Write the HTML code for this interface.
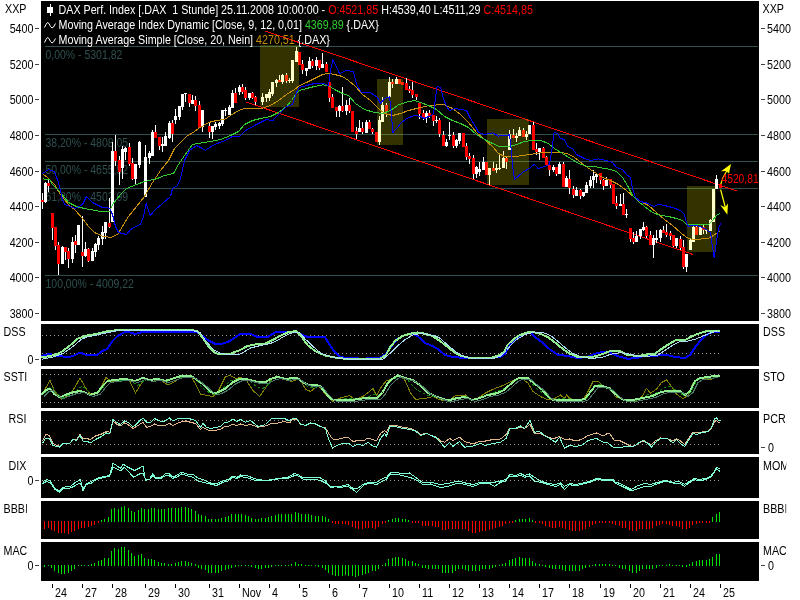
<!DOCTYPE html>
<html lang="de"><head><meta charset="utf-8"><title>DAX Perf. Index</title>
<style>html,body{margin:0;padding:0;background:#fff;overflow:hidden}svg{display:block;will-change:transform}text{font-family:"Liberation Sans",Arial,sans-serif;font-size:13px;fill:#000}.w{fill:#fff}.r{fill:#f00}.g{fill:#32cd32}.o{fill:#c8900c}.f{fill:#2f4f4f}</style></head><body>
<svg width="800" height="600" viewBox="0 0 800 600">
<rect x="0" y="0" width="800" height="600" fill="#fff"/>
<g shape-rendering="crispEdges">
<rect x="41" y="1" width="718" height="320" fill="#000"/>
<rect x="41" y="324" width="718" height="42" fill="#000"/>
<rect x="41" y="369" width="718" height="39" fill="#000"/>
<rect x="41" y="411" width="718" height="43" fill="#000"/>
<rect x="41" y="457" width="718" height="41" fill="#000"/>
<rect x="41" y="501" width="718" height="38" fill="#000"/>
<rect x="41" y="542" width="718" height="39" fill="#000"/>
</g>
<g shape-rendering="crispEdges">
<rect x="45" y="46" width="713" height="1" fill="#2f4f4f"/>
<rect x="45" y="134" width="713" height="1" fill="#2f4f4f"/>
<rect x="45" y="161" width="713" height="1" fill="#2f4f4f"/>
<rect x="45" y="188" width="713" height="1" fill="#2f4f4f"/>
<rect x="45" y="275" width="713" height="1" fill="#2f4f4f"/>
</g>
<text transform="translate(45.5,59) scale(0.805,1)" class="f" xml:space="preserve">0,00% - 5301,82</text>
<text transform="translate(45.5,147) scale(0.805,1)" class="f" xml:space="preserve">38,20% - 4808,05</text>
<text transform="translate(45.5,174) scale(0.805,1)" class="f" xml:space="preserve">50,00% - 4655,52</text>
<text transform="translate(45.5,201) scale(0.805,1)" class="f" xml:space="preserve">61,80% - 4502,99</text>
<text transform="translate(45.5,288) scale(0.805,1)" class="f" xml:space="preserve">100,00% - 4009,22</text>
<g shape-rendering="crispEdges" stroke="#f00" stroke-width="1" fill="none">
<line x1="265" y1="31" x2="737" y2="191"/>
<line x1="246" y1="102" x2="693" y2="254.5"/>
</g>
<g shape-rendering="crispEdges">
<rect x="42" y="193" width="1" height="16" fill="#fff"/>
<rect x="41" y="200" width="3" height="2" fill="#f00"/>
<rect x="45" y="182" width="1" height="21" fill="#fff"/>
<rect x="44" y="183" width="3" height="19" fill="#fff"/>
<rect x="48" y="180" width="1" height="12" fill="#fff"/>
<rect x="47" y="183" width="3" height="3" fill="#f00"/>
<rect x="52" y="213" width="1" height="27" fill="#fff"/>
<rect x="51" y="213" width="3" height="15" fill="#f00"/>
<rect x="55" y="227" width="1" height="23" fill="#fff"/>
<rect x="54" y="227" width="3" height="19" fill="#f00"/>
<rect x="58" y="242" width="1" height="33" fill="#fff"/>
<rect x="57" y="245" width="3" height="19" fill="#f00"/>
<rect x="62" y="246" width="1" height="18" fill="#fff"/>
<rect x="61" y="247" width="3" height="17" fill="#fff"/>
<rect x="65" y="247" width="1" height="13" fill="#fff"/>
<rect x="64" y="247" width="3" height="5" fill="#f00"/>
<rect x="68" y="248" width="1" height="20" fill="#fff"/>
<rect x="67" y="251" width="3" height="8" fill="#f00"/>
<rect x="72" y="237" width="1" height="26" fill="#fff"/>
<rect x="71" y="242" width="3" height="17" fill="#fff"/>
<rect x="75" y="235" width="1" height="18" fill="#fff"/>
<rect x="74" y="241" width="3" height="4" fill="#f00"/>
<rect x="78" y="225" width="1" height="20" fill="#fff"/>
<rect x="77" y="225" width="3" height="20" fill="#fff"/>
<rect x="82" y="216" width="1" height="51" fill="#fff"/>
<rect x="81" y="252" width="3" height="4" fill="#f00"/>
<rect x="85" y="242" width="1" height="15" fill="#fff"/>
<rect x="84" y="249" width="3" height="7" fill="#fff"/>
<rect x="88" y="248" width="1" height="14" fill="#fff"/>
<rect x="87" y="249" width="3" height="12" fill="#f00"/>
<rect x="92" y="248" width="1" height="13" fill="#fff"/>
<rect x="91" y="251" width="3" height="10" fill="#fff"/>
<rect x="95" y="243" width="1" height="14" fill="#fff"/>
<rect x="94" y="244" width="3" height="8" fill="#fff"/>
<rect x="98" y="236" width="1" height="14" fill="#fff"/>
<rect x="97" y="238" width="3" height="7" fill="#fff"/>
<rect x="102" y="226" width="1" height="19" fill="#fff"/>
<rect x="101" y="232" width="3" height="7" fill="#fff"/>
<rect x="105" y="222" width="1" height="17" fill="#fff"/>
<rect x="104" y="222" width="3" height="11" fill="#fff"/>
<rect x="109" y="198" width="1" height="30" fill="#fff"/>
<rect x="108" y="223" width="3" height="4" fill="#f00"/>
<rect x="112" y="142" width="1" height="80" fill="#fff"/>
<rect x="111" y="151" width="3" height="71" fill="#fff"/>
<rect x="115" y="135" width="1" height="31" fill="#fff"/>
<rect x="114" y="151" width="3" height="10" fill="#f00"/>
<rect x="119" y="156" width="1" height="29" fill="#fff"/>
<rect x="118" y="160" width="3" height="12" fill="#f00"/>
<rect x="122" y="146" width="1" height="33" fill="#fff"/>
<rect x="121" y="149" width="3" height="19" fill="#fff"/>
<rect x="125" y="147" width="1" height="13" fill="#fff"/>
<rect x="124" y="148" width="3" height="4" fill="#fff"/>
<rect x="129" y="143" width="1" height="23" fill="#fff"/>
<rect x="128" y="147" width="3" height="17" fill="#f00"/>
<rect x="132" y="158" width="1" height="22" fill="#fff"/>
<rect x="131" y="163" width="3" height="16" fill="#f00"/>
<rect x="135" y="164" width="1" height="21" fill="#fff"/>
<rect x="134" y="164" width="3" height="15" fill="#fff"/>
<rect x="139" y="141" width="1" height="27" fill="#fff"/>
<rect x="138" y="142" width="3" height="23" fill="#fff"/>
<rect x="145" y="145" width="1" height="52" fill="#fff"/>
<rect x="144" y="157" width="3" height="40" fill="#fff"/>
<rect x="149" y="151" width="1" height="13" fill="#fff"/>
<rect x="148" y="153" width="3" height="5" fill="#fff"/>
<rect x="152" y="130" width="1" height="26" fill="#fff"/>
<rect x="151" y="132" width="3" height="24" fill="#fff"/>
<rect x="155" y="125" width="1" height="13" fill="#fff"/>
<rect x="154" y="132" width="3" height="6" fill="#f00"/>
<rect x="159" y="137" width="1" height="13" fill="#fff"/>
<rect x="158" y="137" width="3" height="9" fill="#f00"/>
<rect x="162" y="137" width="1" height="15" fill="#fff"/>
<rect x="161" y="144" width="3" height="2" fill="#fff"/>
<rect x="165" y="132" width="1" height="14" fill="#fff"/>
<rect x="164" y="136" width="3" height="10" fill="#fff"/>
<rect x="169" y="121" width="1" height="18" fill="#fff"/>
<rect x="168" y="123" width="3" height="15" fill="#fff"/>
<rect x="172" y="120" width="1" height="22" fill="#fff"/>
<rect x="171" y="123" width="3" height="11" fill="#f00"/>
<rect x="175" y="109" width="1" height="15" fill="#fff"/>
<rect x="174" y="116" width="3" height="4" fill="#fff"/>
<rect x="179" y="106" width="1" height="14" fill="#fff"/>
<rect x="178" y="106" width="3" height="11" fill="#fff"/>
<rect x="182" y="94" width="1" height="16" fill="#fff"/>
<rect x="181" y="94" width="3" height="13" fill="#fff"/>
<rect x="185" y="93" width="1" height="9" fill="#fff"/>
<rect x="184" y="93" width="3" height="1" fill="#fff"/>
<rect x="189" y="94" width="1" height="13" fill="#fff"/>
<rect x="188" y="94" width="3" height="9" fill="#f00"/>
<rect x="192" y="95" width="1" height="9" fill="#fff"/>
<rect x="191" y="100" width="3" height="4" fill="#fff"/>
<rect x="195" y="96" width="1" height="15" fill="#fff"/>
<rect x="194" y="100" width="3" height="6" fill="#f00"/>
<rect x="199" y="101" width="1" height="27" fill="#fff"/>
<rect x="198" y="105" width="3" height="23" fill="#f00"/>
<rect x="202" y="110" width="1" height="22" fill="#fff"/>
<rect x="201" y="110" width="3" height="17" fill="#fff"/>
<rect x="209" y="122" width="1" height="16" fill="#fff"/>
<rect x="208" y="126" width="3" height="6" fill="#f00"/>
<rect x="212" y="126" width="1" height="13" fill="#fff"/>
<rect x="211" y="126" width="3" height="6" fill="#fff"/>
<rect x="215" y="122" width="1" height="8" fill="#fff"/>
<rect x="214" y="124" width="3" height="3" fill="#fff"/>
<rect x="219" y="122" width="1" height="7" fill="#fff"/>
<rect x="218" y="123" width="3" height="3" fill="#fff"/>
<rect x="222" y="110" width="1" height="16" fill="#fff"/>
<rect x="221" y="110" width="3" height="14" fill="#fff"/>
<rect x="225" y="108" width="1" height="8" fill="#fff"/>
<rect x="224" y="110" width="3" height="1" fill="#fff"/>
<rect x="229" y="105" width="1" height="10" fill="#fff"/>
<rect x="228" y="107" width="3" height="8" fill="#fff"/>
<rect x="232" y="90" width="1" height="18" fill="#fff"/>
<rect x="231" y="93" width="3" height="15" fill="#fff"/>
<rect x="235" y="88" width="1" height="15" fill="#fff"/>
<rect x="234" y="93" width="3" height="10" fill="#f00"/>
<rect x="239" y="85" width="1" height="10" fill="#fff"/>
<rect x="238" y="87" width="3" height="5" fill="#fff"/>
<rect x="242" y="84" width="1" height="10" fill="#fff"/>
<rect x="241" y="87" width="3" height="5" fill="#f00"/>
<rect x="245" y="87" width="1" height="13" fill="#fff"/>
<rect x="244" y="90" width="3" height="8" fill="#f00"/>
<rect x="249" y="93" width="1" height="7" fill="#fff"/>
<rect x="248" y="93" width="3" height="5" fill="#fff"/>
<rect x="252" y="92" width="1" height="7" fill="#fff"/>
<rect x="251" y="93" width="3" height="5" fill="#f00"/>
<rect x="255" y="96" width="1" height="9" fill="#fff"/>
<rect x="254" y="97" width="3" height="5" fill="#f00"/>
<rect x="262" y="93" width="1" height="12" fill="#fff"/>
<rect x="261" y="97" width="3" height="5" fill="#fff"/>
<rect x="266" y="94" width="1" height="8" fill="#fff"/>
<rect x="265" y="94" width="3" height="4" fill="#fff"/>
<rect x="269" y="89" width="1" height="12" fill="#fff"/>
<rect x="268" y="92" width="3" height="6" fill="#fff"/>
<rect x="272" y="82" width="1" height="14" fill="#fff"/>
<rect x="271" y="82" width="3" height="12" fill="#fff"/>
<rect x="276" y="79" width="1" height="8" fill="#fff"/>
<rect x="275" y="80" width="3" height="3" fill="#fff"/>
<rect x="279" y="75" width="1" height="7" fill="#fff"/>
<rect x="278" y="80" width="3" height="2" fill="#f00"/>
<rect x="282" y="74" width="1" height="10" fill="#fff"/>
<rect x="281" y="75" width="3" height="7" fill="#fff"/>
<rect x="286" y="73" width="1" height="10" fill="#fff"/>
<rect x="285" y="75" width="3" height="6" fill="#f00"/>
<rect x="289" y="78" width="1" height="5" fill="#fff"/>
<rect x="288" y="80" width="3" height="1" fill="#fff"/>
<rect x="292" y="60" width="1" height="23" fill="#fff"/>
<rect x="291" y="60" width="3" height="21" fill="#fff"/>
<rect x="296" y="47" width="1" height="15" fill="#fff"/>
<rect x="295" y="51" width="3" height="11" fill="#fff"/>
<rect x="299" y="52" width="1" height="13" fill="#fff"/>
<rect x="298" y="52" width="3" height="13" fill="#f00"/>
<rect x="302" y="60" width="1" height="14" fill="#fff"/>
<rect x="301" y="64" width="3" height="6" fill="#f00"/>
<rect x="306" y="68" width="1" height="8" fill="#fff"/>
<rect x="305" y="68" width="3" height="3" fill="#fff"/>
<rect x="309" y="57" width="1" height="12" fill="#fff"/>
<rect x="308" y="61" width="3" height="8" fill="#fff"/>
<rect x="312" y="59" width="1" height="9" fill="#fff"/>
<rect x="311" y="61" width="3" height="5" fill="#f00"/>
<rect x="316" y="57" width="1" height="13" fill="#fff"/>
<rect x="315" y="60" width="3" height="6" fill="#fff"/>
<rect x="319" y="60" width="1" height="10" fill="#fff"/>
<rect x="318" y="60" width="3" height="8" fill="#f00"/>
<rect x="322" y="53" width="1" height="15" fill="#fff"/>
<rect x="321" y="64" width="3" height="4" fill="#fff"/>
<rect x="326" y="62" width="1" height="10" fill="#fff"/>
<rect x="325" y="64" width="3" height="8" fill="#f00"/>
<rect x="329" y="82" width="1" height="20" fill="#fff"/>
<rect x="328" y="82" width="3" height="16" fill="#f00"/>
<rect x="332" y="94" width="1" height="14" fill="#fff"/>
<rect x="331" y="97" width="3" height="11" fill="#f00"/>
<rect x="336" y="107" width="1" height="10" fill="#fff"/>
<rect x="335" y="107" width="3" height="4" fill="#f00"/>
<rect x="339" y="105" width="1" height="12" fill="#fff"/>
<rect x="338" y="106" width="3" height="5" fill="#fff"/>
<rect x="342" y="87" width="1" height="25" fill="#fff"/>
<rect x="341" y="106" width="3" height="5" fill="#f00"/>
<rect x="346" y="100" width="1" height="15" fill="#fff"/>
<rect x="345" y="105" width="3" height="6" fill="#fff"/>
<rect x="349" y="98" width="1" height="15" fill="#fff"/>
<rect x="348" y="105" width="3" height="6" fill="#f00"/>
<rect x="352" y="111" width="1" height="21" fill="#fff"/>
<rect x="351" y="111" width="3" height="21" fill="#f00"/>
<rect x="356" y="127" width="1" height="12" fill="#fff"/>
<rect x="355" y="131" width="3" height="3" fill="#f00"/>
<rect x="359" y="120" width="1" height="12" fill="#fff"/>
<rect x="358" y="128" width="3" height="4" fill="#fff"/>
<rect x="362" y="122" width="1" height="12" fill="#fff"/>
<rect x="361" y="128" width="3" height="4" fill="#f00"/>
<rect x="366" y="120" width="1" height="13" fill="#fff"/>
<rect x="365" y="122" width="3" height="11" fill="#fff"/>
<rect x="369" y="120" width="1" height="9" fill="#fff"/>
<rect x="368" y="122" width="3" height="7" fill="#f00"/>
<rect x="372" y="128" width="1" height="6" fill="#fff"/>
<rect x="371" y="129" width="3" height="3" fill="#f00"/>
<rect x="376" y="132" width="1" height="10" fill="#fff"/>
<rect x="375" y="132" width="3" height="10" fill="#f00"/>
<rect x="379" y="116" width="1" height="29" fill="#fff"/>
<rect x="378" y="120" width="3" height="22" fill="#fff"/>
<rect x="382" y="97" width="1" height="25" fill="#fff"/>
<rect x="381" y="105" width="3" height="17" fill="#fff"/>
<rect x="386" y="103" width="1" height="14" fill="#fff"/>
<rect x="385" y="105" width="3" height="7" fill="#f00"/>
<rect x="389" y="77" width="1" height="20" fill="#fff"/>
<rect x="388" y="82" width="3" height="15" fill="#fff"/>
<rect x="392" y="79" width="1" height="9" fill="#fff"/>
<rect x="391" y="82" width="3" height="2" fill="#f00"/>
<rect x="396" y="77" width="1" height="7" fill="#fff"/>
<rect x="395" y="79" width="3" height="5" fill="#fff"/>
<rect x="399" y="79" width="1" height="5" fill="#fff"/>
<rect x="398" y="79" width="3" height="5" fill="#f00"/>
<rect x="402" y="82" width="1" height="3" fill="#fff"/>
<rect x="401" y="82" width="3" height="3" fill="#f00"/>
<rect x="406" y="78" width="1" height="12" fill="#fff"/>
<rect x="405" y="83" width="3" height="7" fill="#f00"/>
<rect x="409" y="86" width="1" height="7" fill="#fff"/>
<rect x="408" y="89" width="3" height="2" fill="#f00"/>
<rect x="412" y="82" width="1" height="16" fill="#fff"/>
<rect x="411" y="90" width="3" height="5" fill="#f00"/>
<rect x="416" y="94" width="1" height="6" fill="#fff"/>
<rect x="415" y="94" width="3" height="3" fill="#f00"/>
<rect x="419" y="103" width="1" height="16" fill="#fff"/>
<rect x="418" y="103" width="3" height="11" fill="#f00"/>
<rect x="423" y="110" width="1" height="10" fill="#fff"/>
<rect x="422" y="113" width="3" height="5" fill="#f00"/>
<rect x="426" y="111" width="1" height="12" fill="#fff"/>
<rect x="425" y="113" width="3" height="4" fill="#fff"/>
<rect x="429" y="110" width="1" height="8" fill="#fff"/>
<rect x="428" y="113" width="3" height="3" fill="#f00"/>
<rect x="433" y="115" width="1" height="11" fill="#fff"/>
<rect x="432" y="115" width="3" height="6" fill="#f00"/>
<rect x="436" y="116" width="1" height="7" fill="#fff"/>
<rect x="435" y="120" width="3" height="1" fill="#fff"/>
<rect x="439" y="118" width="1" height="19" fill="#fff"/>
<rect x="438" y="120" width="3" height="14" fill="#f00"/>
<rect x="443" y="131" width="1" height="15" fill="#fff"/>
<rect x="442" y="135" width="3" height="11" fill="#f00"/>
<rect x="446" y="139" width="1" height="8" fill="#fff"/>
<rect x="445" y="142" width="3" height="4" fill="#fff"/>
<rect x="449" y="122" width="1" height="18" fill="#fff"/>
<rect x="448" y="135" width="3" height="1" fill="#fff"/>
<rect x="453" y="132" width="1" height="16" fill="#fff"/>
<rect x="452" y="135" width="3" height="11" fill="#f00"/>
<rect x="456" y="139" width="1" height="9" fill="#fff"/>
<rect x="455" y="140" width="3" height="6" fill="#fff"/>
<rect x="459" y="133" width="1" height="11" fill="#fff"/>
<rect x="458" y="133" width="3" height="8" fill="#fff"/>
<rect x="463" y="133" width="1" height="14" fill="#fff"/>
<rect x="462" y="133" width="3" height="14" fill="#f00"/>
<rect x="466" y="143" width="1" height="17" fill="#fff"/>
<rect x="465" y="146" width="3" height="11" fill="#f00"/>
<rect x="469" y="153" width="1" height="11" fill="#fff"/>
<rect x="468" y="156" width="3" height="3" fill="#f00"/>
<rect x="473" y="155" width="1" height="24" fill="#fff"/>
<rect x="472" y="158" width="3" height="16" fill="#f00"/>
<rect x="476" y="166" width="1" height="12" fill="#fff"/>
<rect x="475" y="167" width="3" height="7" fill="#fff"/>
<rect x="479" y="162" width="1" height="14" fill="#fff"/>
<rect x="478" y="169" width="3" height="3" fill="#fff"/>
<rect x="483" y="157" width="1" height="13" fill="#fff"/>
<rect x="482" y="162" width="3" height="8" fill="#fff"/>
<rect x="486" y="162" width="1" height="13" fill="#fff"/>
<rect x="485" y="162" width="3" height="13" fill="#f00"/>
<rect x="489" y="168" width="1" height="17" fill="#fff"/>
<rect x="488" y="168" width="3" height="7" fill="#fff"/>
<rect x="493" y="162" width="1" height="9" fill="#fff"/>
<rect x="492" y="168" width="3" height="3" fill="#f00"/>
<rect x="496" y="164" width="1" height="9" fill="#fff"/>
<rect x="495" y="168" width="3" height="2" fill="#fff"/>
<rect x="499" y="155" width="1" height="15" fill="#fff"/>
<rect x="498" y="168" width="3" height="1" fill="#fff"/>
<rect x="503" y="151" width="1" height="17" fill="#fff"/>
<rect x="502" y="158" width="3" height="10" fill="#fff"/>
<rect x="506" y="156" width="1" height="13" fill="#fff"/>
<rect x="505" y="158" width="3" height="4" fill="#f00"/>
<rect x="509" y="130" width="1" height="20" fill="#fff"/>
<rect x="508" y="134" width="3" height="16" fill="#fff"/>
<rect x="513" y="129" width="1" height="9" fill="#fff"/>
<rect x="512" y="135" width="3" height="3" fill="#f00"/>
<rect x="516" y="133" width="1" height="9" fill="#fff"/>
<rect x="515" y="136" width="3" height="2" fill="#fff"/>
<rect x="519" y="127" width="1" height="9" fill="#fff"/>
<rect x="518" y="130" width="3" height="6" fill="#fff"/>
<rect x="523" y="128" width="1" height="9" fill="#fff"/>
<rect x="522" y="130" width="3" height="7" fill="#f00"/>
<rect x="526" y="131" width="1" height="9" fill="#fff"/>
<rect x="525" y="134" width="3" height="3" fill="#fff"/>
<rect x="529" y="125" width="1" height="9" fill="#fff"/>
<rect x="528" y="125" width="3" height="9" fill="#fff"/>
<rect x="533" y="122" width="1" height="28" fill="#fff"/>
<rect x="532" y="125" width="3" height="25" fill="#f00"/>
<rect x="536" y="143" width="1" height="12" fill="#fff"/>
<rect x="535" y="149" width="3" height="3" fill="#f00"/>
<rect x="539" y="148" width="1" height="12" fill="#fff"/>
<rect x="538" y="148" width="3" height="4" fill="#fff"/>
<rect x="543" y="147" width="1" height="11" fill="#fff"/>
<rect x="542" y="148" width="3" height="10" fill="#f00"/>
<rect x="546" y="156" width="1" height="9" fill="#fff"/>
<rect x="545" y="157" width="3" height="8" fill="#f00"/>
<rect x="549" y="165" width="1" height="11" fill="#fff"/>
<rect x="548" y="165" width="3" height="5" fill="#f00"/>
<rect x="553" y="165" width="1" height="7" fill="#fff"/>
<rect x="552" y="167" width="3" height="3" fill="#fff"/>
<rect x="556" y="167" width="1" height="9" fill="#fff"/>
<rect x="555" y="167" width="3" height="7" fill="#f00"/>
<rect x="559" y="162" width="1" height="12" fill="#fff"/>
<rect x="558" y="164" width="3" height="10" fill="#fff"/>
<rect x="563" y="162" width="1" height="25" fill="#fff"/>
<rect x="562" y="164" width="3" height="23" fill="#f00"/>
<rect x="566" y="176" width="1" height="11" fill="#fff"/>
<rect x="565" y="178" width="3" height="9" fill="#fff"/>
<rect x="569" y="170" width="1" height="24" fill="#fff"/>
<rect x="568" y="179" width="3" height="9" fill="#f00"/>
<rect x="573" y="186" width="1" height="12" fill="#fff"/>
<rect x="572" y="189" width="3" height="6" fill="#f00"/>
<rect x="576" y="187" width="1" height="9" fill="#fff"/>
<rect x="575" y="190" width="3" height="6" fill="#fff"/>
<rect x="580" y="189" width="1" height="10" fill="#fff"/>
<rect x="579" y="190" width="3" height="6" fill="#f00"/>
<rect x="583" y="192" width="1" height="5" fill="#fff"/>
<rect x="582" y="192" width="3" height="4" fill="#fff"/>
<rect x="586" y="182" width="1" height="11" fill="#fff"/>
<rect x="585" y="185" width="3" height="8" fill="#fff"/>
<rect x="590" y="176" width="1" height="12" fill="#fff"/>
<rect x="589" y="180" width="3" height="6" fill="#fff"/>
<rect x="593" y="170" width="1" height="18" fill="#fff"/>
<rect x="592" y="176" width="3" height="4" fill="#fff"/>
<rect x="596" y="173" width="1" height="10" fill="#fff"/>
<rect x="595" y="174" width="3" height="3" fill="#fff"/>
<rect x="600" y="173" width="1" height="11" fill="#fff"/>
<rect x="599" y="173" width="3" height="7" fill="#f00"/>
<rect x="603" y="179" width="1" height="11" fill="#fff"/>
<rect x="602" y="180" width="3" height="6" fill="#f00"/>
<rect x="606" y="177" width="1" height="9" fill="#fff"/>
<rect x="605" y="180" width="3" height="6" fill="#fff"/>
<rect x="610" y="179" width="1" height="9" fill="#fff"/>
<rect x="609" y="179" width="3" height="6" fill="#f00"/>
<rect x="613" y="184" width="1" height="20" fill="#fff"/>
<rect x="612" y="184" width="3" height="20" fill="#f00"/>
<rect x="616" y="196" width="1" height="13" fill="#fff"/>
<rect x="615" y="203" width="3" height="3" fill="#f00"/>
<rect x="620" y="194" width="1" height="12" fill="#fff"/>
<rect x="619" y="204" width="3" height="2" fill="#fff"/>
<rect x="623" y="193" width="1" height="22" fill="#fff"/>
<rect x="622" y="204" width="3" height="11" fill="#f00"/>
<rect x="626" y="209" width="1" height="9" fill="#fff"/>
<rect x="625" y="214" width="3" height="1" fill="#fff"/>
<rect x="630" y="228" width="1" height="14" fill="#fff"/>
<rect x="629" y="228" width="3" height="11" fill="#f00"/>
<rect x="633" y="232" width="1" height="12" fill="#fff"/>
<rect x="632" y="238" width="3" height="4" fill="#f00"/>
<rect x="636" y="231" width="1" height="11" fill="#fff"/>
<rect x="635" y="236" width="3" height="6" fill="#fff"/>
<rect x="640" y="229" width="1" height="10" fill="#fff"/>
<rect x="639" y="229" width="3" height="7" fill="#fff"/>
<rect x="643" y="222" width="1" height="9" fill="#fff"/>
<rect x="642" y="227" width="3" height="3" fill="#fff"/>
<rect x="646" y="226" width="1" height="12" fill="#fff"/>
<rect x="645" y="227" width="3" height="9" fill="#f00"/>
<rect x="650" y="231" width="1" height="14" fill="#fff"/>
<rect x="649" y="235" width="3" height="10" fill="#f00"/>
<rect x="653" y="235" width="1" height="23" fill="#fff"/>
<rect x="652" y="238" width="3" height="7" fill="#fff"/>
<rect x="656" y="230" width="1" height="13" fill="#fff"/>
<rect x="655" y="238" width="3" height="2" fill="#fff"/>
<rect x="660" y="229" width="1" height="13" fill="#fff"/>
<rect x="659" y="230" width="3" height="8" fill="#fff"/>
<rect x="663" y="226" width="1" height="7" fill="#fff"/>
<rect x="662" y="230" width="3" height="3" fill="#f00"/>
<rect x="666" y="224" width="1" height="13" fill="#fff"/>
<rect x="665" y="232" width="3" height="3" fill="#f00"/>
<rect x="670" y="231" width="1" height="9" fill="#fff"/>
<rect x="669" y="233" width="3" height="3" fill="#f00"/>
<rect x="673" y="235" width="1" height="12" fill="#fff"/>
<rect x="672" y="235" width="3" height="11" fill="#f00"/>
<rect x="676" y="238" width="1" height="10" fill="#fff"/>
<rect x="675" y="238" width="3" height="8" fill="#fff"/>
<rect x="680" y="236" width="1" height="14" fill="#fff"/>
<rect x="679" y="239" width="3" height="9" fill="#f00"/>
<rect x="683" y="240" width="1" height="29" fill="#fff"/>
<rect x="682" y="247" width="3" height="20" fill="#f00"/>
<rect x="686" y="254" width="1" height="18" fill="#fff"/>
<rect x="685" y="254" width="3" height="13" fill="#fff"/>
<rect x="690" y="239" width="1" height="11" fill="#fff"/>
<rect x="689" y="240" width="3" height="10" fill="#fff"/>
<rect x="693" y="226" width="1" height="16" fill="#fff"/>
<rect x="692" y="227" width="3" height="15" fill="#fff"/>
<rect x="696" y="225" width="1" height="10" fill="#fff"/>
<rect x="695" y="227" width="3" height="8" fill="#f00"/>
<rect x="700" y="226" width="1" height="9" fill="#fff"/>
<rect x="699" y="227" width="3" height="8" fill="#fff"/>
<rect x="703" y="225" width="1" height="9" fill="#fff"/>
<rect x="702" y="227" width="3" height="3" fill="#f00"/>
<rect x="706" y="229" width="1" height="5" fill="#fff"/>
<rect x="705" y="230" width="3" height="1" fill="#fff"/>
<rect x="710" y="219" width="1" height="12" fill="#fff"/>
<rect x="709" y="220" width="3" height="11" fill="#fff"/>
<rect x="713" y="189" width="1" height="33" fill="#fff"/>
<rect x="712" y="189" width="3" height="33" fill="#fff"/>
<rect x="716" y="175" width="1" height="14" fill="#fff"/>
<rect x="715" y="179" width="3" height="10" fill="#fff"/>
<rect x="720" y="184" width="1" height="4" fill="#fff"/>
<rect x="719" y="184" width="3" height="4" fill="#f00"/>
<rect x="260" y="45" width="39" height="62" fill="#ffff00" fill-opacity="0.2"/>
<rect x="377" y="79" width="26" height="66" fill="#ffff00" fill-opacity="0.2"/>
<rect x="487" y="119" width="42" height="66" fill="#ffff00" fill-opacity="0.2"/>
<rect x="687" y="186" width="29" height="66" fill="#ffff00" fill-opacity="0.2"/>
</g>
<g shape-rendering="crispEdges">
<polyline points="42.5,173.5 48.5,178.5 54.5,184.5 60.5,194.5 68.5,204.5 75.5,210.5 82.5,218.5 88.5,226.5 94.5,232.5 102.5,236.1 110.5,237.5 117.5,234.5 122.5,226.5 128.5,216.5 136.5,206.5 144.5,196.5 152.5,182.5 160.5,170.5 168.5,160.5 174.5,148.5 180.5,142.5 186.5,136.5 194.5,131.5 198.5,128.5 208.5,122.5 216.5,120.5 224.5,119.5 230.5,115.5 238.5,110.5 244.5,108.5 252.5,108.1 262.5,108.1 270.5,105.5 278.5,100.5 286.5,94.5 294.5,89.5 299.5,85.5 306.5,82.5 314.5,78.5 322.5,74.5 328.5,73.5 334.5,74.5 342.5,76.5 348.5,80.5 355.5,86.5 362.5,94.5 370.5,100.5 378.5,108.5 384.5,113.5 392.5,115.5 400.5,113.5 408.5,110.5 416.5,108.5 426.5,106.1 436.5,104.9 444.5,104.9 452.5,108.5 460.5,114.5 468.5,122.5 476.5,132.5 484.5,139.5 492.5,146.5 498.5,153.5 504.5,156.5 512.5,156.9 522.5,155.5 532.5,154.1 542.5,152.5 552.5,152.1 560.5,152.1 566.5,153.5 572.5,156.1 578.5,160.5 584.5,165.5 590.5,169.5 596.5,173.5 602.5,177.5 610.5,180.5 618.5,184.5 626.5,190.5 634.5,197.5 642.5,202.5 648.5,205.5 656.5,212.5 664.5,219.5 672.5,225.5 680.5,232.5 686.5,237.5 692.5,239.5 700.5,239.1 708.5,238.1 713.5,235.5 717.5,232.5 720.5,230.5" stroke="#c8900c" stroke-width="1" fill="none" stroke-linejoin="round"/>
<polyline points="42.5,178.9 49.5,179.5 52.5,184.5 60.5,192.5 68.5,202.5 76.5,206.5 84.5,208.5 98.5,211.1 109.5,211.9 112.5,204.5 120.5,194.5 126.5,188.5 136.5,184.5 144.5,181.5 156.5,178.9 164.5,175.5 173.5,173.5 178.5,164.5 184.5,155.5 192.5,144.5 198.5,143.5 210.5,141.5 220.5,139.5 230.5,135.5 238.5,131.5 244.5,124.5 252.5,120.5 260.5,118.5 270.5,116.5 278.5,112.5 286.5,106.5 291.5,100.5 295.5,94.5 299.5,90.5 306.5,88.5 314.5,86.5 322.5,84.9 328.5,85.5 334.5,89.5 342.5,93.5 348.5,95.5 355.5,103.5 364.5,109.5 374.5,112.5 382.5,113.5 390.5,110.5 398.5,104.9 406.5,102.1 414.5,100.5 420.5,102.5 428.5,105.5 436.5,109.5 444.5,116.5 452.5,120.5 460.5,123.5 468.5,127.5 476.5,134.5 484.5,139.5 492.5,143.5 498.5,146.1 508.5,146.9 516.5,144.5 524.5,141.5 532.5,140.5 540.5,140.5 548.5,143.5 554.5,148.5 562.5,153.5 570.5,158.5 578.5,163.5 586.5,166.1 594.5,166.5 602.5,168.1 610.5,169.5 616.5,171.5 622.5,177.5 627.5,185.5 632.5,195.5 638.5,201.5 644.5,206.5 652.5,212.5 660.5,215.5 668.5,216.5 676.5,218.5 682.5,220.5 686.5,224.1 694.5,224.5 702.5,224.9 708.5,224.5 712.5,220.5 716.5,215.5 720.5,212.9" stroke="#32cd32" stroke-width="1" fill="none" stroke-linejoin="round"/>
<polyline points="42.5,173.5 48.5,169.5 54.5,171.5 58.5,182.5 62.5,199.5 64.5,204.5 75.5,208.5 82.5,204.5 86.5,196.5 92.5,202.5 102.5,207.5 109.5,208.1 112.5,214.5 115.5,226.5 118.5,232.5 126.5,234.5 130.5,229.5 140.5,224.1 143.5,216.5 146.1,203.5 150.1,215.5 155.5,209.5 162.5,203.5 170.5,196.5 172.5,188.5 177.5,185.5 180.5,178.5 184.5,160.5 189.5,150.5 196.5,145.5 205.5,150.1 214.5,144.5 225.5,140.5 232.5,136.5 239.5,136.5 245.5,130.5 256.5,124.5 266.5,119.5 272.5,120.9 278.5,114.5 286.5,106.5 292.5,104.5 296.5,92.5 299.5,87.5 306.5,85.5 314.5,83.5 323.5,83.5 328.5,85.5 330.5,70.5 332.9,59.5 334.9,63.5 339.5,73.5 346.5,70.5 353.5,71.5 356.5,84.5 361.5,92.5 370.5,92.5 377.5,97.5 380.5,103.5 384.5,98.5 389.5,96.9 390.9,108.5 392.9,132.5 397.5,127.5 400.5,123.5 406.5,118.5 414.5,115.5 420.5,116.5 424.5,118.5 428.5,116.5 433.5,114.5 434.9,102.5 437.1,86.5 440.5,87.5 443.5,98.5 446.5,106.5 449.5,110.5 455.5,108.5 466.5,110.5 470.5,118.5 475.5,126.5 478.5,132.5 484.5,134.5 492.5,132.9 498.5,136.1 509.5,134.9 511.1,148.5 512.9,168.5 514.5,179.5 522.5,172.5 530.5,167.5 534.5,164.1 538.1,168.5 544.5,166.5 549.5,164.5 551.5,152.5 554.1,132.5 557.5,133.5 560.5,138.5 564.5,139.5 567.5,146.5 572.5,148.5 576.5,154.5 584.5,158.5 590.5,160.5 598.5,158.9 606.5,160.5 612.5,162.5 616.5,167.5 622.5,169.5 626.5,174.5 630.5,177.5 632.5,188.5 635.5,197.5 640.5,201.5 648.5,203.5 653.5,206.5 658.5,204.5 664.5,205.5 672.5,207.5 680.5,210.5 684.5,214.5 686.5,223.5 688.5,226.1 696.5,225.5 702.5,227.5 707.5,230.5 710.5,232.5 712.1,244.5 714.1,257.5 716.1,244.5 718.5,228.5 721.1,222.5" stroke="#0000ff" stroke-width="1" fill="none" stroke-linejoin="round"/>
</g>
<g stroke="#ffff00" fill="#ffff00" stroke-width="1.2">
<path d="M720.5,185 Q722.5,177 727,170.5" fill="none"/>
<polygon points="731,164 721,171.3 726.3,171 729,173.4" stroke="none"/>
<line x1="720.6" y1="189.5" x2="725.5" y2="208"/>
<polygon points="727.3,214.8 720.3,205 725.2,207.4 728,203.3" stroke="none"/>
</g>
<rect x="719" y="184" width="3" height="3" fill="#f00" shape-rendering="crispEdges"/>
<text transform="translate(721.5,183) scale(0.79,1)" class="r" xml:space="preserve">4520,81</text>
<g shape-rendering="crispEdges" fill="#fff">
<rect x="47" y="7" width="6" height="6"/><rect x="50" y="4" width="1" height="12"/>
</g>
<polyline points="44.5,27.5 46,24.5 47.5,22.5 49,23.5 50.5,26.5 52,28 53.5,27 55.5,23.5" stroke="#fff" stroke-width="1" fill="none"/>
<polyline points="44.5,42.5 46,39.5 47.5,37.5 49,38.5 50.5,41.5 52,43 53.5,42 55.5,38.5" stroke="#fff" stroke-width="1" fill="none"/>
<text transform="translate(58.5,14) scale(0.825,1)" class="w" xml:space="preserve">DAX Perf. Index [.DAX  1 Stunde] 25.11.2008 10:00:00 - <tspan class="r">O:4521,85</tspan> H:4539,40 L:4511,29 <tspan class="r">C:4514,85</tspan></text>
<text transform="translate(58.5,29) scale(0.825,1)" class="w" xml:space="preserve">Moving Average Index Dynamic [Close, 9, 12, 0,01] <tspan class="g">4369,89</tspan> {.DAX}</text>
<text transform="translate(58.5,44) scale(0.825,1)" class="w" xml:space="preserve">Moving Average Simple [Close, 20, Nein] <tspan class="o">4270,51</tspan> {.DAX}</text>
<g shape-rendering="crispEdges" fill="#444">
<rect x="35" y="28" width="4" height="1"/><rect x="761" y="28" width="4" height="1"/>
<rect x="35" y="64" width="4" height="1"/><rect x="761" y="64" width="4" height="1"/>
<rect x="35" y="99" width="4" height="1"/><rect x="761" y="99" width="4" height="1"/>
<rect x="35" y="135" width="4" height="1"/><rect x="761" y="135" width="4" height="1"/>
<rect x="35" y="171" width="4" height="1"/><rect x="761" y="171" width="4" height="1"/>
<rect x="35" y="206" width="4" height="1"/><rect x="761" y="206" width="4" height="1"/>
<rect x="35" y="242" width="4" height="1"/><rect x="761" y="242" width="4" height="1"/>
<rect x="35" y="277" width="4" height="1"/><rect x="761" y="277" width="4" height="1"/>
<rect x="35" y="313" width="4" height="1"/><rect x="761" y="313" width="4" height="1"/>
<rect x="35" y="359" width="4" height="1"/>
<rect x="35" y="480" width="4" height="1"/>
<rect x="35" y="565" width="4" height="1"/>
<rect x="761" y="447" width="4" height="1"/>
<rect x="761" y="565" width="4" height="1"/>
</g>
<text transform="translate(33.5,33) scale(0.825,1)" text-anchor="end" xml:space="preserve">5400</text>
<text transform="translate(767,33) scale(0.825,1)" xml:space="preserve">5400</text>
<text transform="translate(33.5,69) scale(0.825,1)" text-anchor="end" xml:space="preserve">5200</text>
<text transform="translate(767,69) scale(0.825,1)" xml:space="preserve">5200</text>
<text transform="translate(33.5,104) scale(0.825,1)" text-anchor="end" xml:space="preserve">5000</text>
<text transform="translate(767,104) scale(0.825,1)" xml:space="preserve">5000</text>
<text transform="translate(33.5,140) scale(0.825,1)" text-anchor="end" xml:space="preserve">4800</text>
<text transform="translate(767,140) scale(0.825,1)" xml:space="preserve">4800</text>
<text transform="translate(33.5,176) scale(0.825,1)" text-anchor="end" xml:space="preserve">4600</text>
<text transform="translate(767,176) scale(0.825,1)" xml:space="preserve">4600</text>
<text transform="translate(33.5,211) scale(0.825,1)" text-anchor="end" xml:space="preserve">4400</text>
<text transform="translate(767,211) scale(0.825,1)" xml:space="preserve">4400</text>
<text transform="translate(33.5,247) scale(0.825,1)" text-anchor="end" xml:space="preserve">4200</text>
<text transform="translate(767,247) scale(0.825,1)" xml:space="preserve">4200</text>
<text transform="translate(33.5,282) scale(0.825,1)" text-anchor="end" xml:space="preserve">4000</text>
<text transform="translate(767,282) scale(0.825,1)" xml:space="preserve">4000</text>
<text transform="translate(33.5,318) scale(0.825,1)" text-anchor="end" xml:space="preserve">3800</text>
<text transform="translate(767,318) scale(0.825,1)" xml:space="preserve">3800</text>
<text transform="translate(5,13) scale(0.825,1)" xml:space="preserve">XXP</text>
<text transform="translate(762.5,13) scale(0.825,1)" xml:space="preserve">XXP</text>
<text transform="translate(33.5,364) scale(0.825,1)" text-anchor="end" xml:space="preserve">0</text>
<text transform="translate(33.5,485) scale(0.825,1)" text-anchor="end" xml:space="preserve">0</text>
<text transform="translate(33.5,570) scale(0.825,1)" text-anchor="end" xml:space="preserve">0</text>
<text transform="translate(768,452) scale(0.825,1)" xml:space="preserve">0</text>
<text transform="translate(768,570) scale(0.825,1)" xml:space="preserve">0</text>
<clipPath id="cl"><rect x="0" y="320" width="26.8" height="280"/></clipPath>
<clipPath id="cr"><rect x="760" y="320" width="26.3" height="280"/></clipPath>
<g clip-path="url(#cl)">
<text transform="translate(3.5,336) scale(0.825,1)" xml:space="preserve">DSS</text>
<text transform="translate(3.5,381) scale(0.825,1)" xml:space="preserve">SSTI</text>
<text transform="translate(8.5,423) scale(0.825,1)" xml:space="preserve">RSI</text>
<text transform="translate(8.5,470) scale(0.825,1)" xml:space="preserve">DIX</text>
<text transform="translate(3.5,513) scale(0.825,1)" xml:space="preserve">BBBI</text>
<text transform="translate(3.5,555) scale(0.825,1)" xml:space="preserve">MACD</text>
</g>
<g clip-path="url(#cr)">
<text transform="translate(763,336) scale(0.825,1)" xml:space="preserve">DSS</text>
<text transform="translate(763,381) scale(0.825,1)" xml:space="preserve">STO</text>
<text transform="translate(763,423) scale(0.825,1)" xml:space="preserve">PCR</text>
<text transform="translate(763,470) scale(0.825,1)" xml:space="preserve">MOM</text>
<text transform="translate(763,513) scale(0.825,1)" xml:space="preserve">BBBI</text>
<text transform="translate(763,555) scale(0.825,1)" xml:space="preserve">MACD</text>
</g>
<g shape-rendering="crispEdges" fill="#9c9c9c">
<rect x="42" y="335" width="1" height="1"/>
<rect x="46" y="335" width="1" height="1"/>
<rect x="50" y="335" width="1" height="1"/>
<rect x="54" y="335" width="1" height="1"/>
<rect x="58" y="335" width="1" height="1"/>
<rect x="62" y="335" width="1" height="1"/>
<rect x="66" y="335" width="1" height="1"/>
<rect x="70" y="335" width="1" height="1"/>
<rect x="74" y="335" width="1" height="1"/>
<rect x="78" y="335" width="1" height="1"/>
<rect x="82" y="335" width="1" height="1"/>
<rect x="86" y="335" width="1" height="1"/>
<rect x="90" y="335" width="1" height="1"/>
<rect x="94" y="335" width="1" height="1"/>
<rect x="98" y="335" width="1" height="1"/>
<rect x="102" y="335" width="1" height="1"/>
<rect x="106" y="335" width="1" height="1"/>
<rect x="110" y="335" width="1" height="1"/>
<rect x="114" y="335" width="1" height="1"/>
<rect x="118" y="335" width="1" height="1"/>
<rect x="122" y="335" width="1" height="1"/>
<rect x="126" y="335" width="1" height="1"/>
<rect x="130" y="335" width="1" height="1"/>
<rect x="134" y="335" width="1" height="1"/>
<rect x="138" y="335" width="1" height="1"/>
<rect x="142" y="335" width="1" height="1"/>
<rect x="146" y="335" width="1" height="1"/>
<rect x="150" y="335" width="1" height="1"/>
<rect x="154" y="335" width="1" height="1"/>
<rect x="158" y="335" width="1" height="1"/>
<rect x="162" y="335" width="1" height="1"/>
<rect x="166" y="335" width="1" height="1"/>
<rect x="170" y="335" width="1" height="1"/>
<rect x="174" y="335" width="1" height="1"/>
<rect x="178" y="335" width="1" height="1"/>
<rect x="182" y="335" width="1" height="1"/>
<rect x="186" y="335" width="1" height="1"/>
<rect x="190" y="335" width="1" height="1"/>
<rect x="194" y="335" width="1" height="1"/>
<rect x="198" y="335" width="1" height="1"/>
<rect x="202" y="335" width="1" height="1"/>
<rect x="206" y="335" width="1" height="1"/>
<rect x="210" y="335" width="1" height="1"/>
<rect x="214" y="335" width="1" height="1"/>
<rect x="218" y="335" width="1" height="1"/>
<rect x="222" y="335" width="1" height="1"/>
<rect x="226" y="335" width="1" height="1"/>
<rect x="230" y="335" width="1" height="1"/>
<rect x="234" y="335" width="1" height="1"/>
<rect x="238" y="335" width="1" height="1"/>
<rect x="242" y="335" width="1" height="1"/>
<rect x="246" y="335" width="1" height="1"/>
<rect x="250" y="335" width="1" height="1"/>
<rect x="254" y="335" width="1" height="1"/>
<rect x="258" y="335" width="1" height="1"/>
<rect x="262" y="335" width="1" height="1"/>
<rect x="266" y="335" width="1" height="1"/>
<rect x="270" y="335" width="1" height="1"/>
<rect x="274" y="335" width="1" height="1"/>
<rect x="278" y="335" width="1" height="1"/>
<rect x="282" y="335" width="1" height="1"/>
<rect x="286" y="335" width="1" height="1"/>
<rect x="290" y="335" width="1" height="1"/>
<rect x="294" y="335" width="1" height="1"/>
<rect x="298" y="335" width="1" height="1"/>
<rect x="302" y="335" width="1" height="1"/>
<rect x="306" y="335" width="1" height="1"/>
<rect x="310" y="335" width="1" height="1"/>
<rect x="314" y="335" width="1" height="1"/>
<rect x="318" y="335" width="1" height="1"/>
<rect x="322" y="335" width="1" height="1"/>
<rect x="326" y="335" width="1" height="1"/>
<rect x="330" y="335" width="1" height="1"/>
<rect x="334" y="335" width="1" height="1"/>
<rect x="338" y="335" width="1" height="1"/>
<rect x="342" y="335" width="1" height="1"/>
<rect x="346" y="335" width="1" height="1"/>
<rect x="350" y="335" width="1" height="1"/>
<rect x="354" y="335" width="1" height="1"/>
<rect x="358" y="335" width="1" height="1"/>
<rect x="362" y="335" width="1" height="1"/>
<rect x="366" y="335" width="1" height="1"/>
<rect x="370" y="335" width="1" height="1"/>
<rect x="374" y="335" width="1" height="1"/>
<rect x="378" y="335" width="1" height="1"/>
<rect x="382" y="335" width="1" height="1"/>
<rect x="386" y="335" width="1" height="1"/>
<rect x="390" y="335" width="1" height="1"/>
<rect x="394" y="335" width="1" height="1"/>
<rect x="398" y="335" width="1" height="1"/>
<rect x="402" y="335" width="1" height="1"/>
<rect x="406" y="335" width="1" height="1"/>
<rect x="410" y="335" width="1" height="1"/>
<rect x="414" y="335" width="1" height="1"/>
<rect x="418" y="335" width="1" height="1"/>
<rect x="422" y="335" width="1" height="1"/>
<rect x="426" y="335" width="1" height="1"/>
<rect x="430" y="335" width="1" height="1"/>
<rect x="434" y="335" width="1" height="1"/>
<rect x="438" y="335" width="1" height="1"/>
<rect x="442" y="335" width="1" height="1"/>
<rect x="446" y="335" width="1" height="1"/>
<rect x="450" y="335" width="1" height="1"/>
<rect x="454" y="335" width="1" height="1"/>
<rect x="458" y="335" width="1" height="1"/>
<rect x="462" y="335" width="1" height="1"/>
<rect x="466" y="335" width="1" height="1"/>
<rect x="470" y="335" width="1" height="1"/>
<rect x="474" y="335" width="1" height="1"/>
<rect x="478" y="335" width="1" height="1"/>
<rect x="482" y="335" width="1" height="1"/>
<rect x="486" y="335" width="1" height="1"/>
<rect x="490" y="335" width="1" height="1"/>
<rect x="494" y="335" width="1" height="1"/>
<rect x="498" y="335" width="1" height="1"/>
<rect x="502" y="335" width="1" height="1"/>
<rect x="506" y="335" width="1" height="1"/>
<rect x="510" y="335" width="1" height="1"/>
<rect x="514" y="335" width="1" height="1"/>
<rect x="518" y="335" width="1" height="1"/>
<rect x="522" y="335" width="1" height="1"/>
<rect x="526" y="335" width="1" height="1"/>
<rect x="530" y="335" width="1" height="1"/>
<rect x="534" y="335" width="1" height="1"/>
<rect x="538" y="335" width="1" height="1"/>
<rect x="542" y="335" width="1" height="1"/>
<rect x="546" y="335" width="1" height="1"/>
<rect x="550" y="335" width="1" height="1"/>
<rect x="554" y="335" width="1" height="1"/>
<rect x="558" y="335" width="1" height="1"/>
<rect x="562" y="335" width="1" height="1"/>
<rect x="566" y="335" width="1" height="1"/>
<rect x="570" y="335" width="1" height="1"/>
<rect x="574" y="335" width="1" height="1"/>
<rect x="578" y="335" width="1" height="1"/>
<rect x="582" y="335" width="1" height="1"/>
<rect x="586" y="335" width="1" height="1"/>
<rect x="590" y="335" width="1" height="1"/>
<rect x="594" y="335" width="1" height="1"/>
<rect x="598" y="335" width="1" height="1"/>
<rect x="602" y="335" width="1" height="1"/>
<rect x="606" y="335" width="1" height="1"/>
<rect x="610" y="335" width="1" height="1"/>
<rect x="614" y="335" width="1" height="1"/>
<rect x="618" y="335" width="1" height="1"/>
<rect x="622" y="335" width="1" height="1"/>
<rect x="626" y="335" width="1" height="1"/>
<rect x="630" y="335" width="1" height="1"/>
<rect x="634" y="335" width="1" height="1"/>
<rect x="638" y="335" width="1" height="1"/>
<rect x="642" y="335" width="1" height="1"/>
<rect x="646" y="335" width="1" height="1"/>
<rect x="650" y="335" width="1" height="1"/>
<rect x="654" y="335" width="1" height="1"/>
<rect x="658" y="335" width="1" height="1"/>
<rect x="662" y="335" width="1" height="1"/>
<rect x="666" y="335" width="1" height="1"/>
<rect x="670" y="335" width="1" height="1"/>
<rect x="674" y="335" width="1" height="1"/>
<rect x="678" y="335" width="1" height="1"/>
<rect x="682" y="335" width="1" height="1"/>
<rect x="686" y="335" width="1" height="1"/>
<rect x="690" y="335" width="1" height="1"/>
<rect x="694" y="335" width="1" height="1"/>
<rect x="698" y="335" width="1" height="1"/>
<rect x="702" y="335" width="1" height="1"/>
<rect x="706" y="335" width="1" height="1"/>
<rect x="710" y="335" width="1" height="1"/>
<rect x="714" y="335" width="1" height="1"/>
<rect x="718" y="335" width="1" height="1"/>
<rect x="42" y="353" width="1" height="1"/>
<rect x="46" y="353" width="1" height="1"/>
<rect x="50" y="353" width="1" height="1"/>
<rect x="54" y="353" width="1" height="1"/>
<rect x="58" y="353" width="1" height="1"/>
<rect x="62" y="353" width="1" height="1"/>
<rect x="66" y="353" width="1" height="1"/>
<rect x="70" y="353" width="1" height="1"/>
<rect x="74" y="353" width="1" height="1"/>
<rect x="78" y="353" width="1" height="1"/>
<rect x="82" y="353" width="1" height="1"/>
<rect x="86" y="353" width="1" height="1"/>
<rect x="90" y="353" width="1" height="1"/>
<rect x="94" y="353" width="1" height="1"/>
<rect x="98" y="353" width="1" height="1"/>
<rect x="102" y="353" width="1" height="1"/>
<rect x="106" y="353" width="1" height="1"/>
<rect x="110" y="353" width="1" height="1"/>
<rect x="114" y="353" width="1" height="1"/>
<rect x="118" y="353" width="1" height="1"/>
<rect x="122" y="353" width="1" height="1"/>
<rect x="126" y="353" width="1" height="1"/>
<rect x="130" y="353" width="1" height="1"/>
<rect x="134" y="353" width="1" height="1"/>
<rect x="138" y="353" width="1" height="1"/>
<rect x="142" y="353" width="1" height="1"/>
<rect x="146" y="353" width="1" height="1"/>
<rect x="150" y="353" width="1" height="1"/>
<rect x="154" y="353" width="1" height="1"/>
<rect x="158" y="353" width="1" height="1"/>
<rect x="162" y="353" width="1" height="1"/>
<rect x="166" y="353" width="1" height="1"/>
<rect x="170" y="353" width="1" height="1"/>
<rect x="174" y="353" width="1" height="1"/>
<rect x="178" y="353" width="1" height="1"/>
<rect x="182" y="353" width="1" height="1"/>
<rect x="186" y="353" width="1" height="1"/>
<rect x="190" y="353" width="1" height="1"/>
<rect x="194" y="353" width="1" height="1"/>
<rect x="198" y="353" width="1" height="1"/>
<rect x="202" y="353" width="1" height="1"/>
<rect x="206" y="353" width="1" height="1"/>
<rect x="210" y="353" width="1" height="1"/>
<rect x="214" y="353" width="1" height="1"/>
<rect x="218" y="353" width="1" height="1"/>
<rect x="222" y="353" width="1" height="1"/>
<rect x="226" y="353" width="1" height="1"/>
<rect x="230" y="353" width="1" height="1"/>
<rect x="234" y="353" width="1" height="1"/>
<rect x="238" y="353" width="1" height="1"/>
<rect x="242" y="353" width="1" height="1"/>
<rect x="246" y="353" width="1" height="1"/>
<rect x="250" y="353" width="1" height="1"/>
<rect x="254" y="353" width="1" height="1"/>
<rect x="258" y="353" width="1" height="1"/>
<rect x="262" y="353" width="1" height="1"/>
<rect x="266" y="353" width="1" height="1"/>
<rect x="270" y="353" width="1" height="1"/>
<rect x="274" y="353" width="1" height="1"/>
<rect x="278" y="353" width="1" height="1"/>
<rect x="282" y="353" width="1" height="1"/>
<rect x="286" y="353" width="1" height="1"/>
<rect x="290" y="353" width="1" height="1"/>
<rect x="294" y="353" width="1" height="1"/>
<rect x="298" y="353" width="1" height="1"/>
<rect x="302" y="353" width="1" height="1"/>
<rect x="306" y="353" width="1" height="1"/>
<rect x="310" y="353" width="1" height="1"/>
<rect x="314" y="353" width="1" height="1"/>
<rect x="318" y="353" width="1" height="1"/>
<rect x="322" y="353" width="1" height="1"/>
<rect x="326" y="353" width="1" height="1"/>
<rect x="330" y="353" width="1" height="1"/>
<rect x="334" y="353" width="1" height="1"/>
<rect x="338" y="353" width="1" height="1"/>
<rect x="342" y="353" width="1" height="1"/>
<rect x="346" y="353" width="1" height="1"/>
<rect x="350" y="353" width="1" height="1"/>
<rect x="354" y="353" width="1" height="1"/>
<rect x="358" y="353" width="1" height="1"/>
<rect x="362" y="353" width="1" height="1"/>
<rect x="366" y="353" width="1" height="1"/>
<rect x="370" y="353" width="1" height="1"/>
<rect x="374" y="353" width="1" height="1"/>
<rect x="378" y="353" width="1" height="1"/>
<rect x="382" y="353" width="1" height="1"/>
<rect x="386" y="353" width="1" height="1"/>
<rect x="390" y="353" width="1" height="1"/>
<rect x="394" y="353" width="1" height="1"/>
<rect x="398" y="353" width="1" height="1"/>
<rect x="402" y="353" width="1" height="1"/>
<rect x="406" y="353" width="1" height="1"/>
<rect x="410" y="353" width="1" height="1"/>
<rect x="414" y="353" width="1" height="1"/>
<rect x="418" y="353" width="1" height="1"/>
<rect x="422" y="353" width="1" height="1"/>
<rect x="426" y="353" width="1" height="1"/>
<rect x="430" y="353" width="1" height="1"/>
<rect x="434" y="353" width="1" height="1"/>
<rect x="438" y="353" width="1" height="1"/>
<rect x="442" y="353" width="1" height="1"/>
<rect x="446" y="353" width="1" height="1"/>
<rect x="450" y="353" width="1" height="1"/>
<rect x="454" y="353" width="1" height="1"/>
<rect x="458" y="353" width="1" height="1"/>
<rect x="462" y="353" width="1" height="1"/>
<rect x="466" y="353" width="1" height="1"/>
<rect x="470" y="353" width="1" height="1"/>
<rect x="474" y="353" width="1" height="1"/>
<rect x="478" y="353" width="1" height="1"/>
<rect x="482" y="353" width="1" height="1"/>
<rect x="486" y="353" width="1" height="1"/>
<rect x="490" y="353" width="1" height="1"/>
<rect x="494" y="353" width="1" height="1"/>
<rect x="498" y="353" width="1" height="1"/>
<rect x="502" y="353" width="1" height="1"/>
<rect x="506" y="353" width="1" height="1"/>
<rect x="510" y="353" width="1" height="1"/>
<rect x="514" y="353" width="1" height="1"/>
<rect x="518" y="353" width="1" height="1"/>
<rect x="522" y="353" width="1" height="1"/>
<rect x="526" y="353" width="1" height="1"/>
<rect x="530" y="353" width="1" height="1"/>
<rect x="534" y="353" width="1" height="1"/>
<rect x="538" y="353" width="1" height="1"/>
<rect x="542" y="353" width="1" height="1"/>
<rect x="546" y="353" width="1" height="1"/>
<rect x="550" y="353" width="1" height="1"/>
<rect x="554" y="353" width="1" height="1"/>
<rect x="558" y="353" width="1" height="1"/>
<rect x="562" y="353" width="1" height="1"/>
<rect x="566" y="353" width="1" height="1"/>
<rect x="570" y="353" width="1" height="1"/>
<rect x="574" y="353" width="1" height="1"/>
<rect x="578" y="353" width="1" height="1"/>
<rect x="582" y="353" width="1" height="1"/>
<rect x="586" y="353" width="1" height="1"/>
<rect x="590" y="353" width="1" height="1"/>
<rect x="594" y="353" width="1" height="1"/>
<rect x="598" y="353" width="1" height="1"/>
<rect x="602" y="353" width="1" height="1"/>
<rect x="606" y="353" width="1" height="1"/>
<rect x="610" y="353" width="1" height="1"/>
<rect x="614" y="353" width="1" height="1"/>
<rect x="618" y="353" width="1" height="1"/>
<rect x="622" y="353" width="1" height="1"/>
<rect x="626" y="353" width="1" height="1"/>
<rect x="630" y="353" width="1" height="1"/>
<rect x="634" y="353" width="1" height="1"/>
<rect x="638" y="353" width="1" height="1"/>
<rect x="642" y="353" width="1" height="1"/>
<rect x="646" y="353" width="1" height="1"/>
<rect x="650" y="353" width="1" height="1"/>
<rect x="654" y="353" width="1" height="1"/>
<rect x="658" y="353" width="1" height="1"/>
<rect x="662" y="353" width="1" height="1"/>
<rect x="666" y="353" width="1" height="1"/>
<rect x="670" y="353" width="1" height="1"/>
<rect x="674" y="353" width="1" height="1"/>
<rect x="678" y="353" width="1" height="1"/>
<rect x="682" y="353" width="1" height="1"/>
<rect x="686" y="353" width="1" height="1"/>
<rect x="690" y="353" width="1" height="1"/>
<rect x="694" y="353" width="1" height="1"/>
<rect x="698" y="353" width="1" height="1"/>
<rect x="702" y="353" width="1" height="1"/>
<rect x="706" y="353" width="1" height="1"/>
<rect x="710" y="353" width="1" height="1"/>
<rect x="714" y="353" width="1" height="1"/>
<rect x="718" y="353" width="1" height="1"/>
<rect x="42" y="374" width="1" height="1"/>
<rect x="46" y="374" width="1" height="1"/>
<rect x="50" y="374" width="1" height="1"/>
<rect x="54" y="374" width="1" height="1"/>
<rect x="58" y="374" width="1" height="1"/>
<rect x="62" y="374" width="1" height="1"/>
<rect x="66" y="374" width="1" height="1"/>
<rect x="70" y="374" width="1" height="1"/>
<rect x="74" y="374" width="1" height="1"/>
<rect x="78" y="374" width="1" height="1"/>
<rect x="82" y="374" width="1" height="1"/>
<rect x="86" y="374" width="1" height="1"/>
<rect x="90" y="374" width="1" height="1"/>
<rect x="94" y="374" width="1" height="1"/>
<rect x="98" y="374" width="1" height="1"/>
<rect x="102" y="374" width="1" height="1"/>
<rect x="106" y="374" width="1" height="1"/>
<rect x="110" y="374" width="1" height="1"/>
<rect x="114" y="374" width="1" height="1"/>
<rect x="118" y="374" width="1" height="1"/>
<rect x="122" y="374" width="1" height="1"/>
<rect x="126" y="374" width="1" height="1"/>
<rect x="130" y="374" width="1" height="1"/>
<rect x="134" y="374" width="1" height="1"/>
<rect x="138" y="374" width="1" height="1"/>
<rect x="142" y="374" width="1" height="1"/>
<rect x="146" y="374" width="1" height="1"/>
<rect x="150" y="374" width="1" height="1"/>
<rect x="154" y="374" width="1" height="1"/>
<rect x="158" y="374" width="1" height="1"/>
<rect x="162" y="374" width="1" height="1"/>
<rect x="166" y="374" width="1" height="1"/>
<rect x="170" y="374" width="1" height="1"/>
<rect x="174" y="374" width="1" height="1"/>
<rect x="178" y="374" width="1" height="1"/>
<rect x="182" y="374" width="1" height="1"/>
<rect x="186" y="374" width="1" height="1"/>
<rect x="190" y="374" width="1" height="1"/>
<rect x="194" y="374" width="1" height="1"/>
<rect x="198" y="374" width="1" height="1"/>
<rect x="202" y="374" width="1" height="1"/>
<rect x="206" y="374" width="1" height="1"/>
<rect x="210" y="374" width="1" height="1"/>
<rect x="214" y="374" width="1" height="1"/>
<rect x="218" y="374" width="1" height="1"/>
<rect x="222" y="374" width="1" height="1"/>
<rect x="226" y="374" width="1" height="1"/>
<rect x="230" y="374" width="1" height="1"/>
<rect x="234" y="374" width="1" height="1"/>
<rect x="238" y="374" width="1" height="1"/>
<rect x="242" y="374" width="1" height="1"/>
<rect x="246" y="374" width="1" height="1"/>
<rect x="250" y="374" width="1" height="1"/>
<rect x="254" y="374" width="1" height="1"/>
<rect x="258" y="374" width="1" height="1"/>
<rect x="262" y="374" width="1" height="1"/>
<rect x="266" y="374" width="1" height="1"/>
<rect x="270" y="374" width="1" height="1"/>
<rect x="274" y="374" width="1" height="1"/>
<rect x="278" y="374" width="1" height="1"/>
<rect x="282" y="374" width="1" height="1"/>
<rect x="286" y="374" width="1" height="1"/>
<rect x="290" y="374" width="1" height="1"/>
<rect x="294" y="374" width="1" height="1"/>
<rect x="298" y="374" width="1" height="1"/>
<rect x="302" y="374" width="1" height="1"/>
<rect x="306" y="374" width="1" height="1"/>
<rect x="310" y="374" width="1" height="1"/>
<rect x="314" y="374" width="1" height="1"/>
<rect x="318" y="374" width="1" height="1"/>
<rect x="322" y="374" width="1" height="1"/>
<rect x="326" y="374" width="1" height="1"/>
<rect x="330" y="374" width="1" height="1"/>
<rect x="334" y="374" width="1" height="1"/>
<rect x="338" y="374" width="1" height="1"/>
<rect x="342" y="374" width="1" height="1"/>
<rect x="346" y="374" width="1" height="1"/>
<rect x="350" y="374" width="1" height="1"/>
<rect x="354" y="374" width="1" height="1"/>
<rect x="358" y="374" width="1" height="1"/>
<rect x="362" y="374" width="1" height="1"/>
<rect x="366" y="374" width="1" height="1"/>
<rect x="370" y="374" width="1" height="1"/>
<rect x="374" y="374" width="1" height="1"/>
<rect x="378" y="374" width="1" height="1"/>
<rect x="382" y="374" width="1" height="1"/>
<rect x="386" y="374" width="1" height="1"/>
<rect x="390" y="374" width="1" height="1"/>
<rect x="394" y="374" width="1" height="1"/>
<rect x="398" y="374" width="1" height="1"/>
<rect x="402" y="374" width="1" height="1"/>
<rect x="406" y="374" width="1" height="1"/>
<rect x="410" y="374" width="1" height="1"/>
<rect x="414" y="374" width="1" height="1"/>
<rect x="418" y="374" width="1" height="1"/>
<rect x="422" y="374" width="1" height="1"/>
<rect x="426" y="374" width="1" height="1"/>
<rect x="430" y="374" width="1" height="1"/>
<rect x="434" y="374" width="1" height="1"/>
<rect x="438" y="374" width="1" height="1"/>
<rect x="442" y="374" width="1" height="1"/>
<rect x="446" y="374" width="1" height="1"/>
<rect x="450" y="374" width="1" height="1"/>
<rect x="454" y="374" width="1" height="1"/>
<rect x="458" y="374" width="1" height="1"/>
<rect x="462" y="374" width="1" height="1"/>
<rect x="466" y="374" width="1" height="1"/>
<rect x="470" y="374" width="1" height="1"/>
<rect x="474" y="374" width="1" height="1"/>
<rect x="478" y="374" width="1" height="1"/>
<rect x="482" y="374" width="1" height="1"/>
<rect x="486" y="374" width="1" height="1"/>
<rect x="490" y="374" width="1" height="1"/>
<rect x="494" y="374" width="1" height="1"/>
<rect x="498" y="374" width="1" height="1"/>
<rect x="502" y="374" width="1" height="1"/>
<rect x="506" y="374" width="1" height="1"/>
<rect x="510" y="374" width="1" height="1"/>
<rect x="514" y="374" width="1" height="1"/>
<rect x="518" y="374" width="1" height="1"/>
<rect x="522" y="374" width="1" height="1"/>
<rect x="526" y="374" width="1" height="1"/>
<rect x="530" y="374" width="1" height="1"/>
<rect x="534" y="374" width="1" height="1"/>
<rect x="538" y="374" width="1" height="1"/>
<rect x="542" y="374" width="1" height="1"/>
<rect x="546" y="374" width="1" height="1"/>
<rect x="550" y="374" width="1" height="1"/>
<rect x="554" y="374" width="1" height="1"/>
<rect x="558" y="374" width="1" height="1"/>
<rect x="562" y="374" width="1" height="1"/>
<rect x="566" y="374" width="1" height="1"/>
<rect x="570" y="374" width="1" height="1"/>
<rect x="574" y="374" width="1" height="1"/>
<rect x="578" y="374" width="1" height="1"/>
<rect x="582" y="374" width="1" height="1"/>
<rect x="586" y="374" width="1" height="1"/>
<rect x="590" y="374" width="1" height="1"/>
<rect x="594" y="374" width="1" height="1"/>
<rect x="598" y="374" width="1" height="1"/>
<rect x="602" y="374" width="1" height="1"/>
<rect x="606" y="374" width="1" height="1"/>
<rect x="610" y="374" width="1" height="1"/>
<rect x="614" y="374" width="1" height="1"/>
<rect x="618" y="374" width="1" height="1"/>
<rect x="622" y="374" width="1" height="1"/>
<rect x="626" y="374" width="1" height="1"/>
<rect x="630" y="374" width="1" height="1"/>
<rect x="634" y="374" width="1" height="1"/>
<rect x="638" y="374" width="1" height="1"/>
<rect x="642" y="374" width="1" height="1"/>
<rect x="646" y="374" width="1" height="1"/>
<rect x="650" y="374" width="1" height="1"/>
<rect x="654" y="374" width="1" height="1"/>
<rect x="658" y="374" width="1" height="1"/>
<rect x="662" y="374" width="1" height="1"/>
<rect x="666" y="374" width="1" height="1"/>
<rect x="670" y="374" width="1" height="1"/>
<rect x="674" y="374" width="1" height="1"/>
<rect x="678" y="374" width="1" height="1"/>
<rect x="682" y="374" width="1" height="1"/>
<rect x="686" y="374" width="1" height="1"/>
<rect x="690" y="374" width="1" height="1"/>
<rect x="694" y="374" width="1" height="1"/>
<rect x="698" y="374" width="1" height="1"/>
<rect x="702" y="374" width="1" height="1"/>
<rect x="706" y="374" width="1" height="1"/>
<rect x="710" y="374" width="1" height="1"/>
<rect x="714" y="374" width="1" height="1"/>
<rect x="718" y="374" width="1" height="1"/>
<rect x="42" y="402" width="1" height="1"/>
<rect x="46" y="402" width="1" height="1"/>
<rect x="50" y="402" width="1" height="1"/>
<rect x="54" y="402" width="1" height="1"/>
<rect x="58" y="402" width="1" height="1"/>
<rect x="62" y="402" width="1" height="1"/>
<rect x="66" y="402" width="1" height="1"/>
<rect x="70" y="402" width="1" height="1"/>
<rect x="74" y="402" width="1" height="1"/>
<rect x="78" y="402" width="1" height="1"/>
<rect x="82" y="402" width="1" height="1"/>
<rect x="86" y="402" width="1" height="1"/>
<rect x="90" y="402" width="1" height="1"/>
<rect x="94" y="402" width="1" height="1"/>
<rect x="98" y="402" width="1" height="1"/>
<rect x="102" y="402" width="1" height="1"/>
<rect x="106" y="402" width="1" height="1"/>
<rect x="110" y="402" width="1" height="1"/>
<rect x="114" y="402" width="1" height="1"/>
<rect x="118" y="402" width="1" height="1"/>
<rect x="122" y="402" width="1" height="1"/>
<rect x="126" y="402" width="1" height="1"/>
<rect x="130" y="402" width="1" height="1"/>
<rect x="134" y="402" width="1" height="1"/>
<rect x="138" y="402" width="1" height="1"/>
<rect x="142" y="402" width="1" height="1"/>
<rect x="146" y="402" width="1" height="1"/>
<rect x="150" y="402" width="1" height="1"/>
<rect x="154" y="402" width="1" height="1"/>
<rect x="158" y="402" width="1" height="1"/>
<rect x="162" y="402" width="1" height="1"/>
<rect x="166" y="402" width="1" height="1"/>
<rect x="170" y="402" width="1" height="1"/>
<rect x="174" y="402" width="1" height="1"/>
<rect x="178" y="402" width="1" height="1"/>
<rect x="182" y="402" width="1" height="1"/>
<rect x="186" y="402" width="1" height="1"/>
<rect x="190" y="402" width="1" height="1"/>
<rect x="194" y="402" width="1" height="1"/>
<rect x="198" y="402" width="1" height="1"/>
<rect x="202" y="402" width="1" height="1"/>
<rect x="206" y="402" width="1" height="1"/>
<rect x="210" y="402" width="1" height="1"/>
<rect x="214" y="402" width="1" height="1"/>
<rect x="218" y="402" width="1" height="1"/>
<rect x="222" y="402" width="1" height="1"/>
<rect x="226" y="402" width="1" height="1"/>
<rect x="230" y="402" width="1" height="1"/>
<rect x="234" y="402" width="1" height="1"/>
<rect x="238" y="402" width="1" height="1"/>
<rect x="242" y="402" width="1" height="1"/>
<rect x="246" y="402" width="1" height="1"/>
<rect x="250" y="402" width="1" height="1"/>
<rect x="254" y="402" width="1" height="1"/>
<rect x="258" y="402" width="1" height="1"/>
<rect x="262" y="402" width="1" height="1"/>
<rect x="266" y="402" width="1" height="1"/>
<rect x="270" y="402" width="1" height="1"/>
<rect x="274" y="402" width="1" height="1"/>
<rect x="278" y="402" width="1" height="1"/>
<rect x="282" y="402" width="1" height="1"/>
<rect x="286" y="402" width="1" height="1"/>
<rect x="290" y="402" width="1" height="1"/>
<rect x="294" y="402" width="1" height="1"/>
<rect x="298" y="402" width="1" height="1"/>
<rect x="302" y="402" width="1" height="1"/>
<rect x="306" y="402" width="1" height="1"/>
<rect x="310" y="402" width="1" height="1"/>
<rect x="314" y="402" width="1" height="1"/>
<rect x="318" y="402" width="1" height="1"/>
<rect x="322" y="402" width="1" height="1"/>
<rect x="326" y="402" width="1" height="1"/>
<rect x="330" y="402" width="1" height="1"/>
<rect x="334" y="402" width="1" height="1"/>
<rect x="338" y="402" width="1" height="1"/>
<rect x="342" y="402" width="1" height="1"/>
<rect x="346" y="402" width="1" height="1"/>
<rect x="350" y="402" width="1" height="1"/>
<rect x="354" y="402" width="1" height="1"/>
<rect x="358" y="402" width="1" height="1"/>
<rect x="362" y="402" width="1" height="1"/>
<rect x="366" y="402" width="1" height="1"/>
<rect x="370" y="402" width="1" height="1"/>
<rect x="374" y="402" width="1" height="1"/>
<rect x="378" y="402" width="1" height="1"/>
<rect x="382" y="402" width="1" height="1"/>
<rect x="386" y="402" width="1" height="1"/>
<rect x="390" y="402" width="1" height="1"/>
<rect x="394" y="402" width="1" height="1"/>
<rect x="398" y="402" width="1" height="1"/>
<rect x="402" y="402" width="1" height="1"/>
<rect x="406" y="402" width="1" height="1"/>
<rect x="410" y="402" width="1" height="1"/>
<rect x="414" y="402" width="1" height="1"/>
<rect x="418" y="402" width="1" height="1"/>
<rect x="422" y="402" width="1" height="1"/>
<rect x="426" y="402" width="1" height="1"/>
<rect x="430" y="402" width="1" height="1"/>
<rect x="434" y="402" width="1" height="1"/>
<rect x="438" y="402" width="1" height="1"/>
<rect x="442" y="402" width="1" height="1"/>
<rect x="446" y="402" width="1" height="1"/>
<rect x="450" y="402" width="1" height="1"/>
<rect x="454" y="402" width="1" height="1"/>
<rect x="458" y="402" width="1" height="1"/>
<rect x="462" y="402" width="1" height="1"/>
<rect x="466" y="402" width="1" height="1"/>
<rect x="470" y="402" width="1" height="1"/>
<rect x="474" y="402" width="1" height="1"/>
<rect x="478" y="402" width="1" height="1"/>
<rect x="482" y="402" width="1" height="1"/>
<rect x="486" y="402" width="1" height="1"/>
<rect x="490" y="402" width="1" height="1"/>
<rect x="494" y="402" width="1" height="1"/>
<rect x="498" y="402" width="1" height="1"/>
<rect x="502" y="402" width="1" height="1"/>
<rect x="506" y="402" width="1" height="1"/>
<rect x="510" y="402" width="1" height="1"/>
<rect x="514" y="402" width="1" height="1"/>
<rect x="518" y="402" width="1" height="1"/>
<rect x="522" y="402" width="1" height="1"/>
<rect x="526" y="402" width="1" height="1"/>
<rect x="530" y="402" width="1" height="1"/>
<rect x="534" y="402" width="1" height="1"/>
<rect x="538" y="402" width="1" height="1"/>
<rect x="542" y="402" width="1" height="1"/>
<rect x="546" y="402" width="1" height="1"/>
<rect x="550" y="402" width="1" height="1"/>
<rect x="554" y="402" width="1" height="1"/>
<rect x="558" y="402" width="1" height="1"/>
<rect x="562" y="402" width="1" height="1"/>
<rect x="566" y="402" width="1" height="1"/>
<rect x="570" y="402" width="1" height="1"/>
<rect x="574" y="402" width="1" height="1"/>
<rect x="578" y="402" width="1" height="1"/>
<rect x="582" y="402" width="1" height="1"/>
<rect x="586" y="402" width="1" height="1"/>
<rect x="590" y="402" width="1" height="1"/>
<rect x="594" y="402" width="1" height="1"/>
<rect x="598" y="402" width="1" height="1"/>
<rect x="602" y="402" width="1" height="1"/>
<rect x="606" y="402" width="1" height="1"/>
<rect x="610" y="402" width="1" height="1"/>
<rect x="614" y="402" width="1" height="1"/>
<rect x="618" y="402" width="1" height="1"/>
<rect x="622" y="402" width="1" height="1"/>
<rect x="626" y="402" width="1" height="1"/>
<rect x="630" y="402" width="1" height="1"/>
<rect x="634" y="402" width="1" height="1"/>
<rect x="638" y="402" width="1" height="1"/>
<rect x="642" y="402" width="1" height="1"/>
<rect x="646" y="402" width="1" height="1"/>
<rect x="650" y="402" width="1" height="1"/>
<rect x="654" y="402" width="1" height="1"/>
<rect x="658" y="402" width="1" height="1"/>
<rect x="662" y="402" width="1" height="1"/>
<rect x="666" y="402" width="1" height="1"/>
<rect x="670" y="402" width="1" height="1"/>
<rect x="674" y="402" width="1" height="1"/>
<rect x="678" y="402" width="1" height="1"/>
<rect x="682" y="402" width="1" height="1"/>
<rect x="686" y="402" width="1" height="1"/>
<rect x="690" y="402" width="1" height="1"/>
<rect x="694" y="402" width="1" height="1"/>
<rect x="698" y="402" width="1" height="1"/>
<rect x="702" y="402" width="1" height="1"/>
<rect x="706" y="402" width="1" height="1"/>
<rect x="710" y="402" width="1" height="1"/>
<rect x="714" y="402" width="1" height="1"/>
<rect x="718" y="402" width="1" height="1"/>
<rect x="42" y="420" width="1" height="1"/>
<rect x="46" y="420" width="1" height="1"/>
<rect x="50" y="420" width="1" height="1"/>
<rect x="54" y="420" width="1" height="1"/>
<rect x="58" y="420" width="1" height="1"/>
<rect x="62" y="420" width="1" height="1"/>
<rect x="66" y="420" width="1" height="1"/>
<rect x="70" y="420" width="1" height="1"/>
<rect x="74" y="420" width="1" height="1"/>
<rect x="78" y="420" width="1" height="1"/>
<rect x="82" y="420" width="1" height="1"/>
<rect x="86" y="420" width="1" height="1"/>
<rect x="90" y="420" width="1" height="1"/>
<rect x="94" y="420" width="1" height="1"/>
<rect x="98" y="420" width="1" height="1"/>
<rect x="102" y="420" width="1" height="1"/>
<rect x="106" y="420" width="1" height="1"/>
<rect x="110" y="420" width="1" height="1"/>
<rect x="114" y="420" width="1" height="1"/>
<rect x="118" y="420" width="1" height="1"/>
<rect x="122" y="420" width="1" height="1"/>
<rect x="126" y="420" width="1" height="1"/>
<rect x="130" y="420" width="1" height="1"/>
<rect x="134" y="420" width="1" height="1"/>
<rect x="138" y="420" width="1" height="1"/>
<rect x="142" y="420" width="1" height="1"/>
<rect x="146" y="420" width="1" height="1"/>
<rect x="150" y="420" width="1" height="1"/>
<rect x="154" y="420" width="1" height="1"/>
<rect x="158" y="420" width="1" height="1"/>
<rect x="162" y="420" width="1" height="1"/>
<rect x="166" y="420" width="1" height="1"/>
<rect x="170" y="420" width="1" height="1"/>
<rect x="174" y="420" width="1" height="1"/>
<rect x="178" y="420" width="1" height="1"/>
<rect x="182" y="420" width="1" height="1"/>
<rect x="186" y="420" width="1" height="1"/>
<rect x="190" y="420" width="1" height="1"/>
<rect x="194" y="420" width="1" height="1"/>
<rect x="198" y="420" width="1" height="1"/>
<rect x="202" y="420" width="1" height="1"/>
<rect x="206" y="420" width="1" height="1"/>
<rect x="210" y="420" width="1" height="1"/>
<rect x="214" y="420" width="1" height="1"/>
<rect x="218" y="420" width="1" height="1"/>
<rect x="222" y="420" width="1" height="1"/>
<rect x="226" y="420" width="1" height="1"/>
<rect x="230" y="420" width="1" height="1"/>
<rect x="234" y="420" width="1" height="1"/>
<rect x="238" y="420" width="1" height="1"/>
<rect x="242" y="420" width="1" height="1"/>
<rect x="246" y="420" width="1" height="1"/>
<rect x="250" y="420" width="1" height="1"/>
<rect x="254" y="420" width="1" height="1"/>
<rect x="258" y="420" width="1" height="1"/>
<rect x="262" y="420" width="1" height="1"/>
<rect x="266" y="420" width="1" height="1"/>
<rect x="270" y="420" width="1" height="1"/>
<rect x="274" y="420" width="1" height="1"/>
<rect x="278" y="420" width="1" height="1"/>
<rect x="282" y="420" width="1" height="1"/>
<rect x="286" y="420" width="1" height="1"/>
<rect x="290" y="420" width="1" height="1"/>
<rect x="294" y="420" width="1" height="1"/>
<rect x="298" y="420" width="1" height="1"/>
<rect x="302" y="420" width="1" height="1"/>
<rect x="306" y="420" width="1" height="1"/>
<rect x="310" y="420" width="1" height="1"/>
<rect x="314" y="420" width="1" height="1"/>
<rect x="318" y="420" width="1" height="1"/>
<rect x="322" y="420" width="1" height="1"/>
<rect x="326" y="420" width="1" height="1"/>
<rect x="330" y="420" width="1" height="1"/>
<rect x="334" y="420" width="1" height="1"/>
<rect x="338" y="420" width="1" height="1"/>
<rect x="342" y="420" width="1" height="1"/>
<rect x="346" y="420" width="1" height="1"/>
<rect x="350" y="420" width="1" height="1"/>
<rect x="354" y="420" width="1" height="1"/>
<rect x="358" y="420" width="1" height="1"/>
<rect x="362" y="420" width="1" height="1"/>
<rect x="366" y="420" width="1" height="1"/>
<rect x="370" y="420" width="1" height="1"/>
<rect x="374" y="420" width="1" height="1"/>
<rect x="378" y="420" width="1" height="1"/>
<rect x="382" y="420" width="1" height="1"/>
<rect x="386" y="420" width="1" height="1"/>
<rect x="390" y="420" width="1" height="1"/>
<rect x="394" y="420" width="1" height="1"/>
<rect x="398" y="420" width="1" height="1"/>
<rect x="402" y="420" width="1" height="1"/>
<rect x="406" y="420" width="1" height="1"/>
<rect x="410" y="420" width="1" height="1"/>
<rect x="414" y="420" width="1" height="1"/>
<rect x="418" y="420" width="1" height="1"/>
<rect x="422" y="420" width="1" height="1"/>
<rect x="426" y="420" width="1" height="1"/>
<rect x="430" y="420" width="1" height="1"/>
<rect x="434" y="420" width="1" height="1"/>
<rect x="438" y="420" width="1" height="1"/>
<rect x="442" y="420" width="1" height="1"/>
<rect x="446" y="420" width="1" height="1"/>
<rect x="450" y="420" width="1" height="1"/>
<rect x="454" y="420" width="1" height="1"/>
<rect x="458" y="420" width="1" height="1"/>
<rect x="462" y="420" width="1" height="1"/>
<rect x="466" y="420" width="1" height="1"/>
<rect x="470" y="420" width="1" height="1"/>
<rect x="474" y="420" width="1" height="1"/>
<rect x="478" y="420" width="1" height="1"/>
<rect x="482" y="420" width="1" height="1"/>
<rect x="486" y="420" width="1" height="1"/>
<rect x="490" y="420" width="1" height="1"/>
<rect x="494" y="420" width="1" height="1"/>
<rect x="498" y="420" width="1" height="1"/>
<rect x="502" y="420" width="1" height="1"/>
<rect x="506" y="420" width="1" height="1"/>
<rect x="510" y="420" width="1" height="1"/>
<rect x="514" y="420" width="1" height="1"/>
<rect x="518" y="420" width="1" height="1"/>
<rect x="522" y="420" width="1" height="1"/>
<rect x="526" y="420" width="1" height="1"/>
<rect x="530" y="420" width="1" height="1"/>
<rect x="534" y="420" width="1" height="1"/>
<rect x="538" y="420" width="1" height="1"/>
<rect x="542" y="420" width="1" height="1"/>
<rect x="546" y="420" width="1" height="1"/>
<rect x="550" y="420" width="1" height="1"/>
<rect x="554" y="420" width="1" height="1"/>
<rect x="558" y="420" width="1" height="1"/>
<rect x="562" y="420" width="1" height="1"/>
<rect x="566" y="420" width="1" height="1"/>
<rect x="570" y="420" width="1" height="1"/>
<rect x="574" y="420" width="1" height="1"/>
<rect x="578" y="420" width="1" height="1"/>
<rect x="582" y="420" width="1" height="1"/>
<rect x="586" y="420" width="1" height="1"/>
<rect x="590" y="420" width="1" height="1"/>
<rect x="594" y="420" width="1" height="1"/>
<rect x="598" y="420" width="1" height="1"/>
<rect x="602" y="420" width="1" height="1"/>
<rect x="606" y="420" width="1" height="1"/>
<rect x="610" y="420" width="1" height="1"/>
<rect x="614" y="420" width="1" height="1"/>
<rect x="618" y="420" width="1" height="1"/>
<rect x="622" y="420" width="1" height="1"/>
<rect x="626" y="420" width="1" height="1"/>
<rect x="630" y="420" width="1" height="1"/>
<rect x="634" y="420" width="1" height="1"/>
<rect x="638" y="420" width="1" height="1"/>
<rect x="642" y="420" width="1" height="1"/>
<rect x="646" y="420" width="1" height="1"/>
<rect x="650" y="420" width="1" height="1"/>
<rect x="654" y="420" width="1" height="1"/>
<rect x="658" y="420" width="1" height="1"/>
<rect x="662" y="420" width="1" height="1"/>
<rect x="666" y="420" width="1" height="1"/>
<rect x="670" y="420" width="1" height="1"/>
<rect x="674" y="420" width="1" height="1"/>
<rect x="678" y="420" width="1" height="1"/>
<rect x="682" y="420" width="1" height="1"/>
<rect x="686" y="420" width="1" height="1"/>
<rect x="690" y="420" width="1" height="1"/>
<rect x="694" y="420" width="1" height="1"/>
<rect x="698" y="420" width="1" height="1"/>
<rect x="702" y="420" width="1" height="1"/>
<rect x="706" y="420" width="1" height="1"/>
<rect x="710" y="420" width="1" height="1"/>
<rect x="714" y="420" width="1" height="1"/>
<rect x="718" y="420" width="1" height="1"/>
<rect x="42" y="444" width="1" height="1"/>
<rect x="46" y="444" width="1" height="1"/>
<rect x="50" y="444" width="1" height="1"/>
<rect x="54" y="444" width="1" height="1"/>
<rect x="58" y="444" width="1" height="1"/>
<rect x="62" y="444" width="1" height="1"/>
<rect x="66" y="444" width="1" height="1"/>
<rect x="70" y="444" width="1" height="1"/>
<rect x="74" y="444" width="1" height="1"/>
<rect x="78" y="444" width="1" height="1"/>
<rect x="82" y="444" width="1" height="1"/>
<rect x="86" y="444" width="1" height="1"/>
<rect x="90" y="444" width="1" height="1"/>
<rect x="94" y="444" width="1" height="1"/>
<rect x="98" y="444" width="1" height="1"/>
<rect x="102" y="444" width="1" height="1"/>
<rect x="106" y="444" width="1" height="1"/>
<rect x="110" y="444" width="1" height="1"/>
<rect x="114" y="444" width="1" height="1"/>
<rect x="118" y="444" width="1" height="1"/>
<rect x="122" y="444" width="1" height="1"/>
<rect x="126" y="444" width="1" height="1"/>
<rect x="130" y="444" width="1" height="1"/>
<rect x="134" y="444" width="1" height="1"/>
<rect x="138" y="444" width="1" height="1"/>
<rect x="142" y="444" width="1" height="1"/>
<rect x="146" y="444" width="1" height="1"/>
<rect x="150" y="444" width="1" height="1"/>
<rect x="154" y="444" width="1" height="1"/>
<rect x="158" y="444" width="1" height="1"/>
<rect x="162" y="444" width="1" height="1"/>
<rect x="166" y="444" width="1" height="1"/>
<rect x="170" y="444" width="1" height="1"/>
<rect x="174" y="444" width="1" height="1"/>
<rect x="178" y="444" width="1" height="1"/>
<rect x="182" y="444" width="1" height="1"/>
<rect x="186" y="444" width="1" height="1"/>
<rect x="190" y="444" width="1" height="1"/>
<rect x="194" y="444" width="1" height="1"/>
<rect x="198" y="444" width="1" height="1"/>
<rect x="202" y="444" width="1" height="1"/>
<rect x="206" y="444" width="1" height="1"/>
<rect x="210" y="444" width="1" height="1"/>
<rect x="214" y="444" width="1" height="1"/>
<rect x="218" y="444" width="1" height="1"/>
<rect x="222" y="444" width="1" height="1"/>
<rect x="226" y="444" width="1" height="1"/>
<rect x="230" y="444" width="1" height="1"/>
<rect x="234" y="444" width="1" height="1"/>
<rect x="238" y="444" width="1" height="1"/>
<rect x="242" y="444" width="1" height="1"/>
<rect x="246" y="444" width="1" height="1"/>
<rect x="250" y="444" width="1" height="1"/>
<rect x="254" y="444" width="1" height="1"/>
<rect x="258" y="444" width="1" height="1"/>
<rect x="262" y="444" width="1" height="1"/>
<rect x="266" y="444" width="1" height="1"/>
<rect x="270" y="444" width="1" height="1"/>
<rect x="274" y="444" width="1" height="1"/>
<rect x="278" y="444" width="1" height="1"/>
<rect x="282" y="444" width="1" height="1"/>
<rect x="286" y="444" width="1" height="1"/>
<rect x="290" y="444" width="1" height="1"/>
<rect x="294" y="444" width="1" height="1"/>
<rect x="298" y="444" width="1" height="1"/>
<rect x="302" y="444" width="1" height="1"/>
<rect x="306" y="444" width="1" height="1"/>
<rect x="310" y="444" width="1" height="1"/>
<rect x="314" y="444" width="1" height="1"/>
<rect x="318" y="444" width="1" height="1"/>
<rect x="322" y="444" width="1" height="1"/>
<rect x="326" y="444" width="1" height="1"/>
<rect x="330" y="444" width="1" height="1"/>
<rect x="334" y="444" width="1" height="1"/>
<rect x="338" y="444" width="1" height="1"/>
<rect x="342" y="444" width="1" height="1"/>
<rect x="346" y="444" width="1" height="1"/>
<rect x="350" y="444" width="1" height="1"/>
<rect x="354" y="444" width="1" height="1"/>
<rect x="358" y="444" width="1" height="1"/>
<rect x="362" y="444" width="1" height="1"/>
<rect x="366" y="444" width="1" height="1"/>
<rect x="370" y="444" width="1" height="1"/>
<rect x="374" y="444" width="1" height="1"/>
<rect x="378" y="444" width="1" height="1"/>
<rect x="382" y="444" width="1" height="1"/>
<rect x="386" y="444" width="1" height="1"/>
<rect x="390" y="444" width="1" height="1"/>
<rect x="394" y="444" width="1" height="1"/>
<rect x="398" y="444" width="1" height="1"/>
<rect x="402" y="444" width="1" height="1"/>
<rect x="406" y="444" width="1" height="1"/>
<rect x="410" y="444" width="1" height="1"/>
<rect x="414" y="444" width="1" height="1"/>
<rect x="418" y="444" width="1" height="1"/>
<rect x="422" y="444" width="1" height="1"/>
<rect x="426" y="444" width="1" height="1"/>
<rect x="430" y="444" width="1" height="1"/>
<rect x="434" y="444" width="1" height="1"/>
<rect x="438" y="444" width="1" height="1"/>
<rect x="442" y="444" width="1" height="1"/>
<rect x="446" y="444" width="1" height="1"/>
<rect x="450" y="444" width="1" height="1"/>
<rect x="454" y="444" width="1" height="1"/>
<rect x="458" y="444" width="1" height="1"/>
<rect x="462" y="444" width="1" height="1"/>
<rect x="466" y="444" width="1" height="1"/>
<rect x="470" y="444" width="1" height="1"/>
<rect x="474" y="444" width="1" height="1"/>
<rect x="478" y="444" width="1" height="1"/>
<rect x="482" y="444" width="1" height="1"/>
<rect x="486" y="444" width="1" height="1"/>
<rect x="490" y="444" width="1" height="1"/>
<rect x="494" y="444" width="1" height="1"/>
<rect x="498" y="444" width="1" height="1"/>
<rect x="502" y="444" width="1" height="1"/>
<rect x="506" y="444" width="1" height="1"/>
<rect x="510" y="444" width="1" height="1"/>
<rect x="514" y="444" width="1" height="1"/>
<rect x="518" y="444" width="1" height="1"/>
<rect x="522" y="444" width="1" height="1"/>
<rect x="526" y="444" width="1" height="1"/>
<rect x="530" y="444" width="1" height="1"/>
<rect x="534" y="444" width="1" height="1"/>
<rect x="538" y="444" width="1" height="1"/>
<rect x="542" y="444" width="1" height="1"/>
<rect x="546" y="444" width="1" height="1"/>
<rect x="550" y="444" width="1" height="1"/>
<rect x="554" y="444" width="1" height="1"/>
<rect x="558" y="444" width="1" height="1"/>
<rect x="562" y="444" width="1" height="1"/>
<rect x="566" y="444" width="1" height="1"/>
<rect x="570" y="444" width="1" height="1"/>
<rect x="574" y="444" width="1" height="1"/>
<rect x="578" y="444" width="1" height="1"/>
<rect x="582" y="444" width="1" height="1"/>
<rect x="586" y="444" width="1" height="1"/>
<rect x="590" y="444" width="1" height="1"/>
<rect x="594" y="444" width="1" height="1"/>
<rect x="598" y="444" width="1" height="1"/>
<rect x="602" y="444" width="1" height="1"/>
<rect x="606" y="444" width="1" height="1"/>
<rect x="610" y="444" width="1" height="1"/>
<rect x="614" y="444" width="1" height="1"/>
<rect x="618" y="444" width="1" height="1"/>
<rect x="622" y="444" width="1" height="1"/>
<rect x="626" y="444" width="1" height="1"/>
<rect x="630" y="444" width="1" height="1"/>
<rect x="634" y="444" width="1" height="1"/>
<rect x="638" y="444" width="1" height="1"/>
<rect x="642" y="444" width="1" height="1"/>
<rect x="646" y="444" width="1" height="1"/>
<rect x="650" y="444" width="1" height="1"/>
<rect x="654" y="444" width="1" height="1"/>
<rect x="658" y="444" width="1" height="1"/>
<rect x="662" y="444" width="1" height="1"/>
<rect x="666" y="444" width="1" height="1"/>
<rect x="670" y="444" width="1" height="1"/>
<rect x="674" y="444" width="1" height="1"/>
<rect x="678" y="444" width="1" height="1"/>
<rect x="682" y="444" width="1" height="1"/>
<rect x="686" y="444" width="1" height="1"/>
<rect x="690" y="444" width="1" height="1"/>
<rect x="694" y="444" width="1" height="1"/>
<rect x="698" y="444" width="1" height="1"/>
<rect x="702" y="444" width="1" height="1"/>
<rect x="706" y="444" width="1" height="1"/>
<rect x="710" y="444" width="1" height="1"/>
<rect x="714" y="444" width="1" height="1"/>
<rect x="718" y="444" width="1" height="1"/>
<rect x="42" y="480" width="1" height="1"/>
<rect x="46" y="480" width="1" height="1"/>
<rect x="50" y="480" width="1" height="1"/>
<rect x="54" y="480" width="1" height="1"/>
<rect x="58" y="480" width="1" height="1"/>
<rect x="62" y="480" width="1" height="1"/>
<rect x="66" y="480" width="1" height="1"/>
<rect x="70" y="480" width="1" height="1"/>
<rect x="74" y="480" width="1" height="1"/>
<rect x="78" y="480" width="1" height="1"/>
<rect x="82" y="480" width="1" height="1"/>
<rect x="86" y="480" width="1" height="1"/>
<rect x="90" y="480" width="1" height="1"/>
<rect x="94" y="480" width="1" height="1"/>
<rect x="98" y="480" width="1" height="1"/>
<rect x="102" y="480" width="1" height="1"/>
<rect x="106" y="480" width="1" height="1"/>
<rect x="110" y="480" width="1" height="1"/>
<rect x="114" y="480" width="1" height="1"/>
<rect x="118" y="480" width="1" height="1"/>
<rect x="122" y="480" width="1" height="1"/>
<rect x="126" y="480" width="1" height="1"/>
<rect x="130" y="480" width="1" height="1"/>
<rect x="134" y="480" width="1" height="1"/>
<rect x="138" y="480" width="1" height="1"/>
<rect x="142" y="480" width="1" height="1"/>
<rect x="146" y="480" width="1" height="1"/>
<rect x="150" y="480" width="1" height="1"/>
<rect x="154" y="480" width="1" height="1"/>
<rect x="158" y="480" width="1" height="1"/>
<rect x="162" y="480" width="1" height="1"/>
<rect x="166" y="480" width="1" height="1"/>
<rect x="170" y="480" width="1" height="1"/>
<rect x="174" y="480" width="1" height="1"/>
<rect x="178" y="480" width="1" height="1"/>
<rect x="182" y="480" width="1" height="1"/>
<rect x="186" y="480" width="1" height="1"/>
<rect x="190" y="480" width="1" height="1"/>
<rect x="194" y="480" width="1" height="1"/>
<rect x="198" y="480" width="1" height="1"/>
<rect x="202" y="480" width="1" height="1"/>
<rect x="206" y="480" width="1" height="1"/>
<rect x="210" y="480" width="1" height="1"/>
<rect x="214" y="480" width="1" height="1"/>
<rect x="218" y="480" width="1" height="1"/>
<rect x="222" y="480" width="1" height="1"/>
<rect x="226" y="480" width="1" height="1"/>
<rect x="230" y="480" width="1" height="1"/>
<rect x="234" y="480" width="1" height="1"/>
<rect x="238" y="480" width="1" height="1"/>
<rect x="242" y="480" width="1" height="1"/>
<rect x="246" y="480" width="1" height="1"/>
<rect x="250" y="480" width="1" height="1"/>
<rect x="254" y="480" width="1" height="1"/>
<rect x="258" y="480" width="1" height="1"/>
<rect x="262" y="480" width="1" height="1"/>
<rect x="266" y="480" width="1" height="1"/>
<rect x="270" y="480" width="1" height="1"/>
<rect x="274" y="480" width="1" height="1"/>
<rect x="278" y="480" width="1" height="1"/>
<rect x="282" y="480" width="1" height="1"/>
<rect x="286" y="480" width="1" height="1"/>
<rect x="290" y="480" width="1" height="1"/>
<rect x="294" y="480" width="1" height="1"/>
<rect x="298" y="480" width="1" height="1"/>
<rect x="302" y="480" width="1" height="1"/>
<rect x="306" y="480" width="1" height="1"/>
<rect x="310" y="480" width="1" height="1"/>
<rect x="314" y="480" width="1" height="1"/>
<rect x="318" y="480" width="1" height="1"/>
<rect x="322" y="480" width="1" height="1"/>
<rect x="326" y="480" width="1" height="1"/>
<rect x="330" y="480" width="1" height="1"/>
<rect x="334" y="480" width="1" height="1"/>
<rect x="338" y="480" width="1" height="1"/>
<rect x="342" y="480" width="1" height="1"/>
<rect x="346" y="480" width="1" height="1"/>
<rect x="350" y="480" width="1" height="1"/>
<rect x="354" y="480" width="1" height="1"/>
<rect x="358" y="480" width="1" height="1"/>
<rect x="362" y="480" width="1" height="1"/>
<rect x="366" y="480" width="1" height="1"/>
<rect x="370" y="480" width="1" height="1"/>
<rect x="374" y="480" width="1" height="1"/>
<rect x="378" y="480" width="1" height="1"/>
<rect x="382" y="480" width="1" height="1"/>
<rect x="386" y="480" width="1" height="1"/>
<rect x="390" y="480" width="1" height="1"/>
<rect x="394" y="480" width="1" height="1"/>
<rect x="398" y="480" width="1" height="1"/>
<rect x="402" y="480" width="1" height="1"/>
<rect x="406" y="480" width="1" height="1"/>
<rect x="410" y="480" width="1" height="1"/>
<rect x="414" y="480" width="1" height="1"/>
<rect x="418" y="480" width="1" height="1"/>
<rect x="422" y="480" width="1" height="1"/>
<rect x="426" y="480" width="1" height="1"/>
<rect x="430" y="480" width="1" height="1"/>
<rect x="434" y="480" width="1" height="1"/>
<rect x="438" y="480" width="1" height="1"/>
<rect x="442" y="480" width="1" height="1"/>
<rect x="446" y="480" width="1" height="1"/>
<rect x="450" y="480" width="1" height="1"/>
<rect x="454" y="480" width="1" height="1"/>
<rect x="458" y="480" width="1" height="1"/>
<rect x="462" y="480" width="1" height="1"/>
<rect x="466" y="480" width="1" height="1"/>
<rect x="470" y="480" width="1" height="1"/>
<rect x="474" y="480" width="1" height="1"/>
<rect x="478" y="480" width="1" height="1"/>
<rect x="482" y="480" width="1" height="1"/>
<rect x="486" y="480" width="1" height="1"/>
<rect x="490" y="480" width="1" height="1"/>
<rect x="494" y="480" width="1" height="1"/>
<rect x="498" y="480" width="1" height="1"/>
<rect x="502" y="480" width="1" height="1"/>
<rect x="506" y="480" width="1" height="1"/>
<rect x="510" y="480" width="1" height="1"/>
<rect x="514" y="480" width="1" height="1"/>
<rect x="518" y="480" width="1" height="1"/>
<rect x="522" y="480" width="1" height="1"/>
<rect x="526" y="480" width="1" height="1"/>
<rect x="530" y="480" width="1" height="1"/>
<rect x="534" y="480" width="1" height="1"/>
<rect x="538" y="480" width="1" height="1"/>
<rect x="542" y="480" width="1" height="1"/>
<rect x="546" y="480" width="1" height="1"/>
<rect x="550" y="480" width="1" height="1"/>
<rect x="554" y="480" width="1" height="1"/>
<rect x="558" y="480" width="1" height="1"/>
<rect x="562" y="480" width="1" height="1"/>
<rect x="566" y="480" width="1" height="1"/>
<rect x="570" y="480" width="1" height="1"/>
<rect x="574" y="480" width="1" height="1"/>
<rect x="578" y="480" width="1" height="1"/>
<rect x="582" y="480" width="1" height="1"/>
<rect x="586" y="480" width="1" height="1"/>
<rect x="590" y="480" width="1" height="1"/>
<rect x="594" y="480" width="1" height="1"/>
<rect x="598" y="480" width="1" height="1"/>
<rect x="602" y="480" width="1" height="1"/>
<rect x="606" y="480" width="1" height="1"/>
<rect x="610" y="480" width="1" height="1"/>
<rect x="614" y="480" width="1" height="1"/>
<rect x="618" y="480" width="1" height="1"/>
<rect x="622" y="480" width="1" height="1"/>
<rect x="626" y="480" width="1" height="1"/>
<rect x="630" y="480" width="1" height="1"/>
<rect x="634" y="480" width="1" height="1"/>
<rect x="638" y="480" width="1" height="1"/>
<rect x="642" y="480" width="1" height="1"/>
<rect x="646" y="480" width="1" height="1"/>
<rect x="650" y="480" width="1" height="1"/>
<rect x="654" y="480" width="1" height="1"/>
<rect x="658" y="480" width="1" height="1"/>
<rect x="662" y="480" width="1" height="1"/>
<rect x="666" y="480" width="1" height="1"/>
<rect x="670" y="480" width="1" height="1"/>
<rect x="674" y="480" width="1" height="1"/>
<rect x="678" y="480" width="1" height="1"/>
<rect x="682" y="480" width="1" height="1"/>
<rect x="686" y="480" width="1" height="1"/>
<rect x="690" y="480" width="1" height="1"/>
<rect x="694" y="480" width="1" height="1"/>
<rect x="698" y="480" width="1" height="1"/>
<rect x="702" y="480" width="1" height="1"/>
<rect x="706" y="480" width="1" height="1"/>
<rect x="710" y="480" width="1" height="1"/>
<rect x="714" y="480" width="1" height="1"/>
<rect x="718" y="480" width="1" height="1"/>
</g>
<g shape-rendering="crispEdges">
<polyline points="41,356 50,353.75 55,356 70,357 75,355 80,352.5 85,354.5 97.5,354.5 102.5,351 107.5,348.75 112.5,341 117.5,336 125,332 130,332.5 135,334 142.5,332 147.5,332.5 157.5,332 170,332 180,331.5 195,331.5 200,333.75 207.5,340 215,343.75 222.5,343.75 230,341 235,337.5 240,334 250,333.75 257.5,337 267.5,337 275,332.5 282.5,331.5 295,331.5 300,333.75 307.5,337 325,337 329,343.75 334,351 340,357 347.5,358 365,358.75 370,357.5 380,358 386,353.75 392.5,345 397.5,338.75 405,335 412.5,333.75 417.5,336 425,343 432.5,346 437.5,348.75 440,351 445,355 452.5,357 465,358 490,358 500,357 505,353.75 510,345 515,340 522.5,335 530,332.5 535,337 542.5,342.5 550,349.5 557.5,354.5 567.5,356 577.5,358 587.5,357 595,353.75 602.5,352 610,352.5 617.5,356 627.5,358.75 637.5,358 645,355.5 657.5,355.5 665,354.5 675,357 685,358 690,355 695,347.5 700,341 705,336 710,333 716,331.5 720,331.5" stroke="#0000ff" stroke-width="2" fill="none" stroke-linejoin="round"/>
<polyline points="41,357.5 50,356 57.5,354 62,351.5 70,345.5 77.5,338.75 86,335.6 97.5,333.75 107.5,331 120,330 190,330 197.5,331 202.5,337.5 207.5,345 212.5,351 217.5,353.75 230,353.75 235,352 240,350 247.5,346 255,344.5 265,343.75 272.5,340 280,336 287.5,332.5 296,331 301,336 307.5,345 315,351 325,355.5 335,357.5 345,358.75 380,358.75 386,355 390,347.5 395,341 402.5,336 410,333.75 417.5,332.5 425,333.75 432.5,336 440,341 445,345 452.5,351 460,355.5 467.5,357.5 477.5,358 490,358 497.5,356 504,352 507.5,345 514,338.75 520,335 527.5,332.5 532.5,332 540,333.75 547.5,337 555,342.5 562.5,348.75 570,353.75 577.5,357 585,357.5 592.5,357 600,355 610,351 620,351 627.5,355 637.5,356 647.5,354.5 655,353.75 660,350 667.5,345 675,340.5 685,340 692.5,336 700,333 707.5,331 715,330.75 720,330.75" stroke="#90ee90" stroke-width="2" fill="none" stroke-linejoin="round"/>
<polyline points="41.5,359.25 53,357 63,353.5 73,346.5 81.5,339.25 88,336.5 95.5,335.5 103,333.5 115.5,331 125.5,330.5 193,330.5 200.5,333 205.5,340.5 213,349.25 220.5,353.5 230.5,355 240.5,354 250.5,348 260.5,345.5 270.5,343.5 278,340 285.5,335.5 293,332.5 299.5,332.5 305.5,339.25 313,346.5 320.5,353 330.5,356.5 340.5,358.5 350.5,359.25 383,359.25 390.5,353 398,345.5 405.5,339.25 413,335 420.5,333.5 428,334.25 435.5,336 440.5,338.5 448,345.5 455.5,351.5 463,356 470.5,358 480.5,358.5 493,358.5 500.5,356 506.5,350.5 511.5,344.25 518,338.5 525.5,334.25 533,332.5 543,332.5 550.5,335.5 558,341.5 565.5,348 573,353.5 580.5,356.5 588,358 595.5,358 603,357 610.5,354.25 620.5,352.5 630.5,354.25 640.5,356.5 650.5,356 658,355 665.5,350 673,345 680.5,341.5 688,341 695.5,339.25 703,336 710.5,333 718,331" stroke="#a8dcf0" stroke-width="1" fill="none" stroke-linejoin="round"/>
<polyline points="41.5,395.5 50,380.5 55.5,393 61.5,399.25 68,395.5 74.5,388 80,378 86.5,389.25 91.5,395.5 99.5,390.5 106,377.5 110.5,381.5 120.5,380.5 129.5,380.5 135.5,393 141.5,383 145.5,378.5 153,381.5 159.5,379.25 168,385 176.5,380.5 184.5,375.5 190.5,375 195.5,384.25 200.5,394.25 213,396.5 218,391.5 225.5,376.5 230.5,375.5 235.5,378.5 240.5,377.5 246.5,380.5 253,390.5 259.5,396.5 265.5,388 271.5,379.25 276.5,376 283,379.25 291.5,381.5 299.5,378.5 305.5,389.25 310.5,391.5 318,385.5 324.5,393 333,401.5 340.5,398 349.5,395.5 355.5,400 364.5,395.5 373,388.5 376.5,395.5 380.5,388 386.5,380.5 393,379.25 398,375 404.5,379.25 410.5,393 415.5,399.25 425.5,398.5 433,396.5 440.5,400 448,401 455.5,395.5 465.5,395 470.5,400 478,398 485.5,393 493,389.25 500.5,386.5 508,383 515.5,379.25 520.5,377.5 528,383 533,391.5 540.5,396.5 548,400 555.5,398 560.5,395 564.5,398.5 566.5,395 571.5,400 583,400 588,391.5 593,381.5 598,381 603,386.5 610.5,388 615.5,396.5 623,400 630.5,401.5 640.5,399.25 646.5,388.5 650.5,393 656.5,389.25 661.5,382.5 666.5,380 671.5,386.5 676.5,394.25 683,398.5 688,395.5 693,383 698,378 704.5,378.5 710.5,380 715.5,375.5 720.5,376.5" stroke="#808000" stroke-width="1" fill="none" stroke-linejoin="round"/>
<g stroke-dasharray="3,2"><polyline points="44.5,393.5 47,390.3 49.5,387.9 52,386.7 54.5,390.1 57,393.5 59.5,396.1 62,397.2 64.5,397.3 67,396.1 69.5,395 72,393.5 74.5,391.9 77,390.3 79.5,388 82,386.1 84.5,387.6 87,390.2 89.5,392.7 92,394.1 94.5,394.6 97,393.5 99.5,391.5 102,389 104.5,385.2 107,381.6 109.5,380 112,380.8 114.5,381 117,380.7 119.5,380.4 122,380.1 124.5,379.9 127,380 129.5,380.3 132,380.6 134.5,383.3 137,385.4 139.5,384.7 142,382.2 144.5,380.5 147,379.6 149.5,379.7 152,380.2 154.5,380.4 157,380.1 159.5,379.9 162,379.9 164.5,381.1 167,381.8 169.5,382.1 172,381.6 174.5,380.6 177,379.6 179.5,378.5 182,377.4 184.5,376.5 187,375.8 189.5,375.7 192,376.1 194.5,378.1 197,381 199.5,384.2 202,387.5 204.5,389.7 207,391.1 209.5,392.6 212,394.1 214.5,394.7 217,394 219.5,392.4 222,389.9 224.5,386.9 227,383.7 229.5,381.5 232,380.2 234.5,379.6 237,379.6 239.5,379.1 242,378.6 244.5,379 247,379.7 249.5,380.8 252,382.9 254.5,384.9 257,386.6 259.5,387.8 262,388.9 264.5,387.4 267,385.4 269.5,382.9 272,380.5 274.5,378.7 277,377.6 279.5,377.1 282,378 284.5,378.9 287,379.4 289.5,379.6 292,379.8 294.5,379.9 297,379.4 299.5,379.6 302,380.3 304.5,383.1 307,385.8 309.5,387.3 312,387.9 314.5,387.6 317,386.9 319.5,386.3 322,387.9 324.5,391 327,393.9 329.5,396.4 332,398.8 334.5,400.5 337,400.8 339.5,400.2 342,399.5 344.5,399 347,398.6 349.5,398.3 352,398 354.5,398.8 357,399.5 359.5,399.3 362,398.6 364.5,397.8 367,397.1 369.5,396.2 372,395.3 374.5,394.4 377,395.3 379.5,395.8 382,392.2 384.5,388.5 387,384.7 389.5,381.7 392,380.1 394.5,378.8 397,377.2 399.5,376.2 402,376.7 404.5,377.9 407,379.1 409.5,382 412,384.9 414.5,387.5 417,389.8 419.5,391.3 422,392.4 424.5,393.7 427,395 429.5,395.7 432,396 434.5,396.4 437,397.1 439.5,398.2 442,399.2 444.5,400 447,400.6 449.5,400.7 452,400 454.5,398.8 457,397.6 459.5,397 462,396.8 464.5,396.5 467,396.7 469.5,397.9 472,399.6 474.5,399.9 477,399.2 479.5,398.5 482,397.5 484.5,396.2 487,394.9 489.5,393.9 492,393.1 494.5,392.3 497,391.5 499.5,390.5 502,389.6 504.5,388.2 507,386.5 509.5,384.9 512,383.1 514.5,381.2 517,379.7 519.5,378.6 522,377.9 524.5,378.3 527,379.1 529.5,380.7 532,383.4 534.5,386.4 537,388.8 539.5,390.6 542,392.5 544.5,394.5 547,396.7 549.5,398.4 552,399.4 554.5,399.5 557,399.2 559.5,398.7 562,398 564.5,398.3 567,399.4 569.5,398 572,399.2 574.5,400.2 577,400.2 579.5,400.3 582,400.1 584.5,399.7 587,397.4 589.5,393.8 592,389.9 594.5,385.9 597,384.2 599.5,384.1 602,384.8 604.5,386.3 607,387.4 609.5,388.2 612,389.4 614.5,392 617,395.1 619.5,397.3 622,398.8 624.5,399.8 627,400.2 629.5,400.5 632,400.8 634.5,400.6 637,400.1 639.5,399.6 642,399 644.5,397.5 647,395.2 649.5,393.5 652,394.5 654.5,394.1 657,392.8 659.5,391.3 662,389.3 664.5,387.6 667,386.6 669.5,386.3 672,387.8 674.5,389.3 677,391.1 679.5,392.8 682,394.3 684.5,396.1 687,395.8 689.5,394 692,390 694.5,384.4 697,381 699.5,379.1 702,378.2 704.5,378.1 707,378 709.5,378.1 712,378.2 714.5,377.5 717,376.4" stroke="#0a8a0a" stroke-width="1" fill="none" stroke-linejoin="round"/></g>
<polyline points="41,395 46,390 50,388.75 54,393.75 60,397.5 65,395 72.5,392.5 80,391 85,392.5 90,395 97.5,392.5 102.5,386 107.5,381 115,380 125,378.75 135,381 142.5,378 150,380 157.5,378.75 165,381 172.5,378.75 182.5,375.5 190,375.5 197.5,380 205,386 212.5,393 217.5,392.5 225,388.75 232.5,382.5 240,378.75 247.5,379.5 257.5,382 265,382.5 271,378.75 277.5,377 285,378.75 297.5,378 302.5,382 307.5,384.5 315,385 320,386 325,392.5 331,398.75 335,400.5 345,399.5 355,399.5 365,398 377.5,398 382.5,392.5 387.5,383.75 392.5,378.75 397.5,375.5 405,378 412.5,380 420,385 427.5,392.5 435,396 440,398 447.5,400.5 457.5,398 465,397 472.5,400 480,398 487.5,395 495,393.75 502.5,391 509,385.5 515,380 520,377.5 527.5,377.5 532.5,382 537.5,386 542.5,390 547.5,396 552.5,399.5 565,399.5 580,400 585,398.75 590,392.5 595,386 602.5,386 610,388.75 615,393.75 622.5,399.5 632.5,400 645,397.5 652.5,396 660,392.5 667.5,390.5 675,390.5 680,391 685,395 690,391 695,381 700,378 707.5,377 715,376 720,375.5" stroke="#90ee90" stroke-width="2" fill="none" stroke-linejoin="round"/>
<polyline points="44,396.5 49,391.5 53,390.25 57,395.25 63,399 68,396.5 75.5,394 83,392.5 88,394 93,396.5 100.5,394 105.5,387.5 110.5,382.5 118,381.5 128,380.25 138,382.5 145.5,379.5 153,381.5 160.5,380.25 168,382.5 175.5,380.25 185.5,377 193,377 200.5,381.5 208,387.5 215.5,394.5 220.5,394 228,390.25 235.5,384 243,380.25 250.5,381 260.5,383.5 268,384 274,380.25 280.5,378.5 288,380.25 300.5,379.5 305.5,383.5 310.5,386 318,386.5 323,387.5 328,394 334,400.25 338,402 348,401 358,401 368,399.5 380.5,399.5 385.5,394 390.5,385.25 395.5,380.25 400.5,377 408,379.5 415.5,381.5 423,386.5 430.5,394 438,397.5 443,399.5 450.5,402 460.5,399.5 468,398.5 475.5,401.5 483,399.5 490.5,396.5 498,395.25 505.5,392.5 512,387 518,381.5 523,379 530.5,379 535.5,383.5 540.5,387.5 545.5,391.5 550.5,397.5 555.5,401 568,401 583,401.5 588,400.25 593,394 598,387.5 605.5,387.5 613,390.25 618,395.25 625.5,401 635.5,401.5 648,399 655.5,397.5 663,394 670.5,392 678,392 683,392.5 688,396.5 693,392.5 698,382.5 703,379.5 710.5,378.5 718,377.5" stroke="#4a7a6a" stroke-width="1" fill="none" stroke-linejoin="round"/>
<polyline points="42.5,441 46,434.5 49.5,435.5 53,443.5 59.5,446.5 63,443 69.5,444 73,439 76.5,439.5 80,434.5 83,439 86.5,438.5 90.5,439.5 95.5,436 101.5,434 106.5,431.5 110,432.25 113,421 116.5,424 120.5,426 124.5,423 128,424.5 133,428.5 139.5,424.5 143,422.25 146.5,427.25 150.5,426.5 154.5,424 159.5,426 164.5,425.5 169.5,423.5 173,425.5 179.5,422.25 185.5,421 190.5,422.25 195.5,423.5 200.5,429.5 203,427.25 206.5,429.5 210.5,431 220.5,429.5 224.5,426.5 228,426.5 233,424 236.5,425.5 240.5,424 245.5,425.5 250.5,424.5 258,427.25 265.5,426 271.5,423.5 278,423 284.5,421.5 289.5,423 293,419 296.5,419 300.5,424 305.5,425.5 310.5,423.5 315.5,424 320.5,426.5 325.5,428 328,432.25 332.5,439 336.5,439.5 343,438 348,437.25 353,441.5 358,440.5 363,441 368,438 373,439.5 376.5,441 380.5,433.5 384.5,430.5 386.5,432.25 390,425.5 395.5,425.5 403,427.25 410.5,428.5 415.5,430.5 420.5,434.5 426.5,433.5 431.5,435.5 436.5,437.25 440.5,441 444.5,442.25 449.5,438.5 453,440.5 459.5,437.25 464.5,441.5 473,444 480.5,441 485.5,441 493,439.5 500.5,439 506,434.5 510,428 515.5,428.5 520.5,427.25 524.5,428.5 530,424.5 534.5,433.5 539.5,433.5 544.5,435.5 550.5,438 555.5,438 559.5,436.5 564.5,439.5 569.5,439 575.5,441 581.5,439.5 588,435.5 596.5,433 603,436 606.5,434 609.5,433.5 614.5,440.5 620.5,441 625.5,443.5 631.5,446.5 635.5,445.5 640.5,442.25 644.5,441 648,443 651.5,444.5 654.5,441.5 660.5,438 668,439 673,441 676.5,438.5 680.5,441 684.5,444.5 688,439.5 693,432.25 696.5,433 700.5,432.25 708,431 711.5,428.5 714.5,421.5 716.5,420.5 718.5,422.25 720.5,423.5" stroke="#deb887" stroke-width="1" fill="none" stroke-linejoin="round"/>
<polyline points="42.5,443.5 45.5,438.5 49.5,438.5 53,445.5 59.5,447.25 63,443.5 69.5,443.5 73,439.5 76.5,440.5 80,435.5 83,441 86.5,441 90.5,443 95.5,439.5 101.5,436.5 106.5,433 110,433.5 113,419.5 116.5,422.25 120.5,424.5 124.5,421 128,422.25 133,427.25 139.5,421 143,418 146.5,422.25 150.5,422.25 154.5,418.5 159.5,421 164.5,421 169.5,418 173,421 179.5,418 185.5,418 190.5,419 195.5,420.5 200.5,427.25 203,423.5 206.5,427.25 210.5,428.5 220.5,426.5 224.5,422.25 228,422.25 233,419 236.5,421.5 240.5,419.5 245.5,422.25 250.5,420.5 258,426.5 265.5,424.5 271.5,418.5 278,419 284.5,418.5 289.5,421 293,418 296.5,418 300.5,424 305.5,425.5 310.5,423 315.5,424 320.5,426.5 325.5,428.5 328,437.25 332.5,448 336.5,445.5 343,443.5 348,443 353,446.5 358,444 363,445.5 368,442.25 373,446 376.5,447.25 380.5,438.5 384.5,433.5 386.5,436 390,426.5 395.5,426.5 403,428.5 410.5,429.5 415.5,431 420.5,435.5 426.5,433.5 431.5,435.5 436.5,438 440.5,442.5 444.5,447.25 449.5,442.25 453,446.5 459.5,441.5 464.5,447.25 473,446 480.5,443.5 485.5,445.5 493,443.5 500.5,442.25 506,438.5 510,428.5 515.5,428.5 520.5,426 524.5,428.5 530,420.5 534.5,432.25 539.5,431.5 544.5,435.5 550.5,439 555.5,442.25 559.5,437.25 564.5,448 569.5,445.5 575.5,446.5 581.5,445.5 588,440.5 596.5,438.5 603,442 608,443 613,447.25 620.5,447.25 628,446.5 634.5,446 639.5,442.25 643,440.5 648,443.5 651.5,447.25 654.5,443 660.5,438.5 668,439 673,443 676.5,439.5 680.5,443.5 684.5,446.5 688,441 693,433.5 696.5,434.5 700.5,433 708,431.5 711.5,427.25 714.5,418.5 716.5,418 718.5,420.5 720.5,421" stroke="#7fffd4" stroke-width="1" fill="none" stroke-linejoin="round"/>
<polyline points="42.5,483.5 46.5,481.5 50.5,483 54.5,489 59.5,492.25 63,488.5 70.5,488 75.5,485.5 80,483 83,488.5 86.5,484.5 91.5,483 96.5,479.5 104.5,477.25 109.5,476.5 113,467.25 116.5,468.5 120.5,471 124.5,467.25 128,471 133.5,477.25 139.5,474 143,473 145.5,479.5 149.5,479.5 152.5,476 155.5,478.5 160.5,479 165.5,475.5 169.5,476 173,478.5 176.5,477.25 181.5,474 186.5,475.5 193,477.25 198,481 203,482.25 210.5,484 216.5,485.5 223,482.25 228,481 233,477.25 236.5,478.5 240.5,476.5 248,478 255.5,480.5 265.5,481 278,479 288,478.5 294.5,475.5 298,476 303,479 313,479 320.5,480.5 325.5,483 330.5,486.5 340.5,487.25 348,486.5 353,489.5 356.5,492.25 364.5,484.5 370.5,483.5 376.5,484.5 383,481 386.5,479 390.5,474 396.5,474 401.5,475.5 409.5,477.25 415.5,479.5 423,484.5 430.5,484 440.5,487.5 448,486.5 458,483 465.5,484.5 473,486.5 480.5,483.5 490.5,484 494.5,486.5 500.5,482.25 505.5,481 510,476 515.5,476.5 520.5,475.5 524.5,477.25 529.5,476 534.5,481 540.5,482.25 548,484.5 555.5,486.5 560.5,484.5 564.5,489.5 569.5,484.5 575.5,486 583,484 590.5,482.25 596.5,479.5 605.5,480.5 613,481 615.5,483.5 620.5,485.5 625.5,488 631.5,491 638,488.5 644.5,486.5 650.5,486.5 658,483.5 665.5,481 673,483 679.5,483 684.5,486.5 688,483.5 694.5,479.5 699.5,481 705.5,479.5 710.5,477.25 714.5,472.25 716.5,468.5 720,471.5" stroke="#7fffd4" stroke-width="1" fill="none" stroke-linejoin="round"/>
<polyline points="42.5,482.25 46.5,479.5 50.5,481 54.5,488 59.5,491 63,487.25 70.5,486.5 75.5,482.25 80.5,479.5 83,491 86.5,483.5 91.5,481.5 96.5,478.5 104.5,476.5 109.5,475.5 113,463.5 116.5,465.5 120.5,468.5 123,464 128,467.25 134.5,470.5 139.5,468 143,466 145.5,481 149.5,478.5 152.5,474 155.5,477.25 160.5,478 165.5,473.5 169.5,474 173,477.25 176.5,475.5 181.5,472.25 186.5,474 193,474.5 198,478 203,479.5 210.5,483 216.5,483.5 223,481 228,479.5 233,476 236.5,477.25 240.5,475 248,476 255.5,479 265.5,480.5 278,478.5 288,477.25 294.5,473.5 298,474.5 303,478 313,477.25 320.5,478 325.5,481 330.5,487.25 340.5,486.5 348,484.5 353,488.5 358,488 364.5,483.5 370.5,482.25 376.5,482.25 383,478.5 386.5,477.25 390.5,473 396.5,472.25 401.5,474 409.5,473 415.5,477.25 423,483 430.5,482.25 440.5,484.5 448,483.5 458,481 465.5,483 473,484.5 480.5,482.25 490.5,483 500.5,481 505.5,479.5 510,474.5 515.5,475.5 520.5,473.5 524.5,475.5 529.5,474 534.5,477.25 540.5,481 548,483.5 555.5,484.5 560.5,483 564.5,486.5 569.5,483.5 575.5,484.5 583,483 590.5,481 596.5,478.5 605.5,479.5 613,479.5 615.5,482.25 620.5,483.5 625.5,486.5 631.5,489.5 638,485.5 644.5,483.5 650.5,484.5 658,482.25 665.5,480.5 673,482.25 679.5,481.5 684.5,484.5 688,482.25 694.5,478.5 699.5,479.5 705.5,478.5 710.5,476.5 714.5,471 716.5,467.25 720,469" stroke="#7fffd4" stroke-width="1" fill="none" stroke-linejoin="round"/>
</g>
<g shape-rendering="crispEdges">
<rect x="44" y="521" width="1" height="8" fill="#f00"/>
<rect x="48" y="521" width="1" height="7" fill="#f00"/>
<rect x="51" y="521" width="1" height="9" fill="#f00"/>
<rect x="54" y="521" width="1" height="10" fill="#f00"/>
<rect x="58" y="521" width="1" height="12" fill="#f00"/>
<rect x="61" y="521" width="1" height="12" fill="#f00"/>
<rect x="64" y="521" width="1" height="12" fill="#f00"/>
<rect x="68" y="521" width="1" height="13" fill="#f00"/>
<rect x="71" y="521" width="1" height="11" fill="#f00"/>
<rect x="74" y="521" width="1" height="10" fill="#f00"/>
<rect x="78" y="521" width="1" height="8" fill="#f00"/>
<rect x="81" y="521" width="1" height="7" fill="#f00"/>
<rect x="84" y="521" width="1" height="7" fill="#f00"/>
<rect x="88" y="521" width="1" height="6" fill="#f00"/>
<rect x="91" y="521" width="1" height="5" fill="#f00"/>
<rect x="94" y="521" width="1" height="4" fill="#f00"/>
<rect x="98" y="521" width="1" height="2" fill="#f00"/>
<rect x="101" y="520" width="1" height="2" fill="#00e000"/>
<rect x="104" y="519" width="1" height="3" fill="#00e000"/>
<rect x="108" y="517" width="1" height="5" fill="#00e000"/>
<rect x="111" y="509" width="1" height="13" fill="#00e000"/>
<rect x="114" y="508" width="1" height="14" fill="#00e000"/>
<rect x="118" y="509" width="1" height="13" fill="#00e000"/>
<rect x="121" y="507" width="1" height="15" fill="#00e000"/>
<rect x="124" y="506" width="1" height="16" fill="#00e000"/>
<rect x="128" y="508" width="1" height="14" fill="#00e000"/>
<rect x="131" y="511" width="1" height="11" fill="#00e000"/>
<rect x="134" y="512" width="1" height="10" fill="#00e000"/>
<rect x="138" y="510" width="1" height="12" fill="#00e000"/>
<rect x="141" y="508" width="1" height="14" fill="#00e000"/>
<rect x="144" y="509" width="1" height="13" fill="#00e000"/>
<rect x="148" y="509" width="1" height="13" fill="#00e000"/>
<rect x="151" y="508" width="1" height="14" fill="#00e000"/>
<rect x="154" y="508" width="1" height="14" fill="#00e000"/>
<rect x="158" y="509" width="1" height="13" fill="#00e000"/>
<rect x="161" y="509" width="1" height="13" fill="#00e000"/>
<rect x="164" y="509" width="1" height="13" fill="#00e000"/>
<rect x="168" y="508" width="1" height="14" fill="#00e000"/>
<rect x="171" y="508" width="1" height="14" fill="#00e000"/>
<rect x="175" y="508" width="1" height="14" fill="#00e000"/>
<rect x="178" y="508" width="1" height="14" fill="#00e000"/>
<rect x="181" y="507" width="1" height="15" fill="#00e000"/>
<rect x="185" y="507" width="1" height="15" fill="#00e000"/>
<rect x="188" y="508" width="1" height="14" fill="#00e000"/>
<rect x="191" y="509" width="1" height="13" fill="#00e000"/>
<rect x="195" y="511" width="1" height="11" fill="#00e000"/>
<rect x="198" y="514" width="1" height="8" fill="#00e000"/>
<rect x="201" y="515" width="1" height="7" fill="#00e000"/>
<rect x="205" y="516" width="1" height="6" fill="#00e000"/>
<rect x="208" y="519" width="1" height="3" fill="#00e000"/>
<rect x="211" y="519" width="1" height="3" fill="#00e000"/>
<rect x="215" y="519" width="1" height="3" fill="#00e000"/>
<rect x="218" y="519" width="1" height="3" fill="#00e000"/>
<rect x="221" y="518" width="1" height="4" fill="#00e000"/>
<rect x="225" y="517" width="1" height="5" fill="#00e000"/>
<rect x="228" y="516" width="1" height="6" fill="#00e000"/>
<rect x="231" y="514" width="1" height="8" fill="#00e000"/>
<rect x="235" y="514" width="1" height="8" fill="#00e000"/>
<rect x="238" y="514" width="1" height="8" fill="#00e000"/>
<rect x="241" y="514" width="1" height="8" fill="#00e000"/>
<rect x="245" y="515" width="1" height="7" fill="#00e000"/>
<rect x="248" y="516" width="1" height="6" fill="#00e000"/>
<rect x="251" y="518" width="1" height="4" fill="#00e000"/>
<rect x="255" y="519" width="1" height="3" fill="#00e000"/>
<rect x="258" y="519" width="1" height="3" fill="#00e000"/>
<rect x="261" y="518" width="1" height="4" fill="#00e000"/>
<rect x="265" y="518" width="1" height="4" fill="#00e000"/>
<rect x="268" y="517" width="1" height="5" fill="#00e000"/>
<rect x="271" y="516" width="1" height="6" fill="#00e000"/>
<rect x="275" y="515" width="1" height="7" fill="#00e000"/>
<rect x="278" y="514" width="1" height="8" fill="#00e000"/>
<rect x="281" y="514" width="1" height="8" fill="#00e000"/>
<rect x="285" y="514" width="1" height="8" fill="#00e000"/>
<rect x="288" y="514" width="1" height="8" fill="#00e000"/>
<rect x="291" y="514" width="1" height="8" fill="#00e000"/>
<rect x="295" y="512" width="1" height="10" fill="#00e000"/>
<rect x="298" y="513" width="1" height="9" fill="#00e000"/>
<rect x="301" y="514" width="1" height="8" fill="#00e000"/>
<rect x="305" y="514" width="1" height="8" fill="#00e000"/>
<rect x="308" y="514" width="1" height="8" fill="#00e000"/>
<rect x="311" y="515" width="1" height="7" fill="#00e000"/>
<rect x="315" y="516" width="1" height="6" fill="#00e000"/>
<rect x="318" y="516" width="1" height="6" fill="#00e000"/>
<rect x="322" y="516" width="1" height="6" fill="#00e000"/>
<rect x="325" y="517" width="1" height="5" fill="#00e000"/>
<rect x="328" y="519" width="1" height="3" fill="#00e000"/>
<rect x="332" y="521" width="1" height="2" fill="#f00"/>
<rect x="335" y="521" width="1" height="3" fill="#f00"/>
<rect x="338" y="521" width="1" height="3" fill="#f00"/>
<rect x="342" y="521" width="1" height="3" fill="#f00"/>
<rect x="345" y="521" width="1" height="3" fill="#f00"/>
<rect x="348" y="521" width="1" height="4" fill="#f00"/>
<rect x="352" y="521" width="1" height="6" fill="#f00"/>
<rect x="355" y="521" width="1" height="7" fill="#f00"/>
<rect x="358" y="521" width="1" height="8" fill="#f00"/>
<rect x="362" y="521" width="1" height="8" fill="#f00"/>
<rect x="365" y="521" width="1" height="7" fill="#f00"/>
<rect x="368" y="521" width="1" height="7" fill="#f00"/>
<rect x="372" y="521" width="1" height="7" fill="#f00"/>
<rect x="375" y="521" width="1" height="8" fill="#f00"/>
<rect x="378" y="521" width="1" height="6" fill="#f00"/>
<rect x="382" y="521" width="1" height="3" fill="#f00"/>
<rect x="385" y="521" width="1" height="2" fill="#f00"/>
<rect x="388" y="520" width="1" height="2" fill="#00e000"/>
<rect x="392" y="519" width="1" height="3" fill="#00e000"/>
<rect x="395" y="518" width="1" height="4" fill="#00e000"/>
<rect x="398" y="518" width="1" height="4" fill="#00e000"/>
<rect x="402" y="519" width="1" height="3" fill="#00e000"/>
<rect x="405" y="519" width="1" height="3" fill="#00e000"/>
<rect x="408" y="520" width="1" height="2" fill="#00e000"/>
<rect x="412" y="521" width="1" height="2" fill="#f00"/>
<rect x="415" y="521" width="1" height="2" fill="#f00"/>
<rect x="418" y="521" width="1" height="2" fill="#f00"/>
<rect x="422" y="521" width="1" height="5" fill="#f00"/>
<rect x="425" y="521" width="1" height="5" fill="#f00"/>
<rect x="428" y="521" width="1" height="5" fill="#f00"/>
<rect x="432" y="521" width="1" height="5" fill="#f00"/>
<rect x="435" y="521" width="1" height="6" fill="#f00"/>
<rect x="438" y="521" width="1" height="6" fill="#f00"/>
<rect x="442" y="521" width="1" height="9" fill="#f00"/>
<rect x="445" y="521" width="1" height="9" fill="#f00"/>
<rect x="448" y="521" width="1" height="8" fill="#f00"/>
<rect x="452" y="521" width="1" height="8" fill="#f00"/>
<rect x="455" y="521" width="1" height="8" fill="#f00"/>
<rect x="458" y="521" width="1" height="8" fill="#f00"/>
<rect x="462" y="521" width="1" height="8" fill="#f00"/>
<rect x="465" y="521" width="1" height="8" fill="#f00"/>
<rect x="468" y="521" width="1" height="10" fill="#f00"/>
<rect x="472" y="521" width="1" height="12" fill="#f00"/>
<rect x="475" y="521" width="1" height="12" fill="#f00"/>
<rect x="479" y="521" width="1" height="11" fill="#f00"/>
<rect x="482" y="521" width="1" height="10" fill="#f00"/>
<rect x="485" y="521" width="1" height="10" fill="#f00"/>
<rect x="489" y="521" width="1" height="9" fill="#f00"/>
<rect x="492" y="521" width="1" height="8" fill="#f00"/>
<rect x="495" y="521" width="1" height="7" fill="#f00"/>
<rect x="499" y="521" width="1" height="6" fill="#f00"/>
<rect x="502" y="521" width="1" height="5" fill="#f00"/>
<rect x="505" y="521" width="1" height="3" fill="#f00"/>
<rect x="509" y="521" width="1" height="2" fill="#f00"/>
<rect x="512" y="521" width="1" height="2" fill="#f00"/>
<rect x="515" y="520" width="1" height="2" fill="#00e000"/>
<rect x="519" y="519" width="1" height="3" fill="#00e000"/>
<rect x="522" y="519" width="1" height="3" fill="#00e000"/>
<rect x="525" y="519" width="1" height="3" fill="#00e000"/>
<rect x="529" y="518" width="1" height="4" fill="#00e000"/>
<rect x="532" y="520" width="1" height="2" fill="#00e000"/>
<rect x="535" y="521" width="1" height="2" fill="#f00"/>
<rect x="539" y="521" width="1" height="2" fill="#f00"/>
<rect x="542" y="521" width="1" height="3" fill="#f00"/>
<rect x="545" y="521" width="1" height="5" fill="#f00"/>
<rect x="549" y="521" width="1" height="6" fill="#f00"/>
<rect x="552" y="521" width="1" height="7" fill="#f00"/>
<rect x="555" y="521" width="1" height="7" fill="#f00"/>
<rect x="559" y="521" width="1" height="6" fill="#f00"/>
<rect x="562" y="521" width="1" height="7" fill="#f00"/>
<rect x="565" y="521" width="1" height="8" fill="#f00"/>
<rect x="569" y="521" width="1" height="9" fill="#f00"/>
<rect x="572" y="521" width="1" height="10" fill="#f00"/>
<rect x="575" y="521" width="1" height="10" fill="#f00"/>
<rect x="579" y="521" width="1" height="10" fill="#f00"/>
<rect x="582" y="521" width="1" height="9" fill="#f00"/>
<rect x="585" y="521" width="1" height="8" fill="#f00"/>
<rect x="589" y="521" width="1" height="6" fill="#f00"/>
<rect x="592" y="521" width="1" height="4" fill="#f00"/>
<rect x="595" y="521" width="1" height="3" fill="#f00"/>
<rect x="599" y="521" width="1" height="2" fill="#f00"/>
<rect x="602" y="521" width="1" height="2" fill="#f00"/>
<rect x="605" y="521" width="1" height="2" fill="#f00"/>
<rect x="609" y="521" width="1" height="2" fill="#f00"/>
<rect x="612" y="521" width="1" height="3" fill="#f00"/>
<rect x="615" y="521" width="1" height="4" fill="#f00"/>
<rect x="619" y="521" width="1" height="5" fill="#f00"/>
<rect x="622" y="521" width="1" height="7" fill="#f00"/>
<rect x="625" y="521" width="1" height="7" fill="#f00"/>
<rect x="629" y="521" width="1" height="9" fill="#f00"/>
<rect x="632" y="521" width="1" height="10" fill="#f00"/>
<rect x="636" y="521" width="1" height="10" fill="#f00"/>
<rect x="639" y="521" width="1" height="8" fill="#f00"/>
<rect x="642" y="521" width="1" height="8" fill="#f00"/>
<rect x="646" y="521" width="1" height="8" fill="#f00"/>
<rect x="649" y="521" width="1" height="8" fill="#f00"/>
<rect x="652" y="521" width="1" height="7" fill="#f00"/>
<rect x="656" y="521" width="1" height="5" fill="#f00"/>
<rect x="659" y="521" width="1" height="4" fill="#f00"/>
<rect x="662" y="521" width="1" height="3" fill="#f00"/>
<rect x="666" y="521" width="1" height="3" fill="#f00"/>
<rect x="669" y="521" width="1" height="4" fill="#f00"/>
<rect x="672" y="521" width="1" height="5" fill="#f00"/>
<rect x="676" y="521" width="1" height="5" fill="#f00"/>
<rect x="679" y="521" width="1" height="6" fill="#f00"/>
<rect x="682" y="521" width="1" height="8" fill="#f00"/>
<rect x="686" y="521" width="1" height="8" fill="#f00"/>
<rect x="689" y="521" width="1" height="7" fill="#f00"/>
<rect x="692" y="521" width="1" height="4" fill="#f00"/>
<rect x="696" y="521" width="1" height="3" fill="#f00"/>
<rect x="699" y="521" width="1" height="2" fill="#f00"/>
<rect x="702" y="521" width="1" height="2" fill="#f00"/>
<rect x="706" y="521" width="1" height="2" fill="#f00"/>
<rect x="709" y="521" width="1" height="2" fill="#f00"/>
<rect x="712" y="517" width="1" height="5" fill="#00e000"/>
<rect x="716" y="514" width="1" height="8" fill="#00e000"/>
<rect x="719" y="512" width="1" height="10" fill="#00e000"/>
<rect x="44" y="565" width="1" height="2" fill="#00e000"/>
<rect x="48" y="565" width="1" height="1" fill="#00e000"/>
<rect x="51" y="565" width="1" height="3" fill="#00e000"/>
<rect x="54" y="565" width="1" height="6" fill="#00e000"/>
<rect x="58" y="565" width="1" height="8" fill="#00e000"/>
<rect x="61" y="565" width="1" height="9" fill="#00e000"/>
<rect x="64" y="565" width="1" height="9" fill="#00e000"/>
<rect x="68" y="565" width="1" height="8" fill="#00e000"/>
<rect x="71" y="565" width="1" height="6" fill="#00e000"/>
<rect x="74" y="565" width="1" height="4" fill="#00e000"/>
<rect x="78" y="565" width="1" height="1" fill="#00e000"/>
<rect x="81" y="565" width="1" height="1" fill="#00e000"/>
<rect x="84" y="565" width="1" height="1" fill="#00e000"/>
<rect x="88" y="565" width="1" height="1" fill="#00e000"/>
<rect x="91" y="564" width="1" height="2" fill="#00e000"/>
<rect x="94" y="563" width="1" height="3" fill="#00e000"/>
<rect x="98" y="561" width="1" height="5" fill="#00e000"/>
<rect x="101" y="560" width="1" height="6" fill="#00e000"/>
<rect x="104" y="558" width="1" height="8" fill="#00e000"/>
<rect x="108" y="558" width="1" height="8" fill="#00e000"/>
<rect x="111" y="551" width="1" height="15" fill="#00e000"/>
<rect x="114" y="548" width="1" height="18" fill="#00e000"/>
<rect x="118" y="549" width="1" height="17" fill="#00e000"/>
<rect x="121" y="547" width="1" height="19" fill="#00e000"/>
<rect x="124" y="547" width="1" height="19" fill="#00e000"/>
<rect x="128" y="550" width="1" height="16" fill="#00e000"/>
<rect x="131" y="553" width="1" height="13" fill="#00e000"/>
<rect x="134" y="556" width="1" height="10" fill="#00e000"/>
<rect x="138" y="555" width="1" height="11" fill="#00e000"/>
<rect x="141" y="554" width="1" height="12" fill="#00e000"/>
<rect x="144" y="558" width="1" height="8" fill="#00e000"/>
<rect x="148" y="559" width="1" height="7" fill="#00e000"/>
<rect x="151" y="559" width="1" height="7" fill="#00e000"/>
<rect x="154" y="560" width="1" height="6" fill="#00e000"/>
<rect x="158" y="562" width="1" height="4" fill="#00e000"/>
<rect x="161" y="563" width="1" height="3" fill="#00e000"/>
<rect x="164" y="563" width="1" height="3" fill="#00e000"/>
<rect x="168" y="564" width="1" height="2" fill="#00e000"/>
<rect x="171" y="564" width="1" height="2" fill="#00e000"/>
<rect x="175" y="563" width="1" height="3" fill="#00e000"/>
<rect x="178" y="562" width="1" height="4" fill="#00e000"/>
<rect x="181" y="561" width="1" height="5" fill="#00e000"/>
<rect x="185" y="561" width="1" height="5" fill="#00e000"/>
<rect x="188" y="562" width="1" height="4" fill="#00e000"/>
<rect x="191" y="563" width="1" height="3" fill="#00e000"/>
<rect x="195" y="564" width="1" height="2" fill="#00e000"/>
<rect x="198" y="565" width="1" height="3" fill="#00e000"/>
<rect x="201" y="565" width="1" height="4" fill="#00e000"/>
<rect x="205" y="565" width="1" height="5" fill="#00e000"/>
<rect x="208" y="565" width="1" height="8" fill="#00e000"/>
<rect x="211" y="565" width="1" height="8" fill="#00e000"/>
<rect x="215" y="565" width="1" height="8" fill="#00e000"/>
<rect x="218" y="565" width="1" height="8" fill="#00e000"/>
<rect x="221" y="565" width="1" height="6" fill="#00e000"/>
<rect x="225" y="565" width="1" height="5" fill="#00e000"/>
<rect x="228" y="565" width="1" height="4" fill="#00e000"/>
<rect x="231" y="565" width="1" height="3" fill="#00e000"/>
<rect x="235" y="565" width="1" height="2" fill="#00e000"/>
<rect x="238" y="565" width="1" height="1" fill="#00e000"/>
<rect x="241" y="565" width="1" height="1" fill="#00e000"/>
<rect x="245" y="565" width="1" height="1" fill="#00e000"/>
<rect x="248" y="565" width="1" height="1" fill="#00e000"/>
<rect x="251" y="565" width="1" height="2" fill="#00e000"/>
<rect x="255" y="565" width="1" height="3" fill="#00e000"/>
<rect x="258" y="565" width="1" height="4" fill="#00e000"/>
<rect x="261" y="565" width="1" height="4" fill="#00e000"/>
<rect x="265" y="565" width="1" height="3" fill="#00e000"/>
<rect x="268" y="565" width="1" height="3" fill="#00e000"/>
<rect x="271" y="565" width="1" height="2" fill="#00e000"/>
<rect x="275" y="565" width="1" height="1" fill="#00e000"/>
<rect x="278" y="565" width="1" height="1" fill="#00e000"/>
<rect x="281" y="565" width="1" height="1" fill="#00e000"/>
<rect x="285" y="565" width="1" height="1" fill="#00e000"/>
<rect x="288" y="565" width="1" height="1" fill="#00e000"/>
<rect x="291" y="564" width="1" height="2" fill="#00e000"/>
<rect x="295" y="562" width="1" height="4" fill="#00e000"/>
<rect x="298" y="564" width="1" height="2" fill="#00e000"/>
<rect x="301" y="564" width="1" height="2" fill="#00e000"/>
<rect x="305" y="565" width="1" height="1" fill="#00e000"/>
<rect x="308" y="565" width="1" height="1" fill="#00e000"/>
<rect x="311" y="565" width="1" height="1" fill="#00e000"/>
<rect x="315" y="565" width="1" height="1" fill="#00e000"/>
<rect x="318" y="565" width="1" height="2" fill="#00e000"/>
<rect x="322" y="565" width="1" height="3" fill="#00e000"/>
<rect x="325" y="565" width="1" height="5" fill="#00e000"/>
<rect x="328" y="565" width="1" height="8" fill="#00e000"/>
<rect x="332" y="565" width="1" height="10" fill="#00e000"/>
<rect x="335" y="565" width="1" height="11" fill="#00e000"/>
<rect x="338" y="565" width="1" height="11" fill="#00e000"/>
<rect x="342" y="565" width="1" height="11" fill="#00e000"/>
<rect x="345" y="565" width="1" height="10" fill="#00e000"/>
<rect x="348" y="565" width="1" height="11" fill="#00e000"/>
<rect x="352" y="565" width="1" height="11" fill="#00e000"/>
<rect x="355" y="565" width="1" height="12" fill="#00e000"/>
<rect x="358" y="565" width="1" height="11" fill="#00e000"/>
<rect x="362" y="565" width="1" height="10" fill="#00e000"/>
<rect x="365" y="565" width="1" height="9" fill="#00e000"/>
<rect x="368" y="565" width="1" height="8" fill="#00e000"/>
<rect x="372" y="565" width="1" height="6" fill="#00e000"/>
<rect x="375" y="565" width="1" height="6" fill="#00e000"/>
<rect x="378" y="565" width="1" height="4" fill="#00e000"/>
<rect x="382" y="565" width="1" height="1" fill="#00e000"/>
<rect x="385" y="563" width="1" height="3" fill="#00e000"/>
<rect x="388" y="559" width="1" height="7" fill="#00e000"/>
<rect x="392" y="558" width="1" height="8" fill="#00e000"/>
<rect x="395" y="557" width="1" height="9" fill="#00e000"/>
<rect x="398" y="557" width="1" height="9" fill="#00e000"/>
<rect x="402" y="558" width="1" height="8" fill="#00e000"/>
<rect x="405" y="559" width="1" height="7" fill="#00e000"/>
<rect x="408" y="561" width="1" height="5" fill="#00e000"/>
<rect x="412" y="561" width="1" height="5" fill="#00e000"/>
<rect x="415" y="563" width="1" height="3" fill="#00e000"/>
<rect x="418" y="564" width="1" height="2" fill="#00e000"/>
<rect x="422" y="565" width="1" height="3" fill="#00e000"/>
<rect x="425" y="565" width="1" height="3" fill="#00e000"/>
<rect x="428" y="565" width="1" height="4" fill="#00e000"/>
<rect x="432" y="565" width="1" height="4" fill="#00e000"/>
<rect x="435" y="565" width="1" height="4" fill="#00e000"/>
<rect x="438" y="565" width="1" height="4" fill="#00e000"/>
<rect x="442" y="565" width="1" height="8" fill="#00e000"/>
<rect x="445" y="565" width="1" height="8" fill="#00e000"/>
<rect x="448" y="565" width="1" height="8" fill="#00e000"/>
<rect x="452" y="565" width="1" height="8" fill="#00e000"/>
<rect x="455" y="565" width="1" height="6" fill="#00e000"/>
<rect x="458" y="565" width="1" height="4" fill="#00e000"/>
<rect x="462" y="565" width="1" height="4" fill="#00e000"/>
<rect x="465" y="565" width="1" height="5" fill="#00e000"/>
<rect x="468" y="565" width="1" height="6" fill="#00e000"/>
<rect x="472" y="565" width="1" height="6" fill="#00e000"/>
<rect x="475" y="565" width="1" height="6" fill="#00e000"/>
<rect x="479" y="565" width="1" height="6" fill="#00e000"/>
<rect x="482" y="565" width="1" height="4" fill="#00e000"/>
<rect x="485" y="565" width="1" height="4" fill="#00e000"/>
<rect x="489" y="565" width="1" height="4" fill="#00e000"/>
<rect x="492" y="565" width="1" height="3" fill="#00e000"/>
<rect x="495" y="565" width="1" height="2" fill="#00e000"/>
<rect x="499" y="565" width="1" height="1" fill="#00e000"/>
<rect x="502" y="564" width="1" height="2" fill="#00e000"/>
<rect x="505" y="563" width="1" height="3" fill="#00e000"/>
<rect x="509" y="560" width="1" height="6" fill="#00e000"/>
<rect x="512" y="559" width="1" height="7" fill="#00e000"/>
<rect x="515" y="558" width="1" height="8" fill="#00e000"/>
<rect x="519" y="557" width="1" height="9" fill="#00e000"/>
<rect x="522" y="558" width="1" height="8" fill="#00e000"/>
<rect x="525" y="558" width="1" height="8" fill="#00e000"/>
<rect x="529" y="558" width="1" height="8" fill="#00e000"/>
<rect x="532" y="561" width="1" height="5" fill="#00e000"/>
<rect x="535" y="563" width="1" height="3" fill="#00e000"/>
<rect x="539" y="564" width="1" height="2" fill="#00e000"/>
<rect x="542" y="565" width="1" height="1" fill="#00e000"/>
<rect x="545" y="565" width="1" height="2" fill="#00e000"/>
<rect x="549" y="565" width="1" height="3" fill="#00e000"/>
<rect x="552" y="565" width="1" height="4" fill="#00e000"/>
<rect x="555" y="565" width="1" height="4" fill="#00e000"/>
<rect x="559" y="565" width="1" height="4" fill="#00e000"/>
<rect x="562" y="565" width="1" height="5" fill="#00e000"/>
<rect x="565" y="565" width="1" height="6" fill="#00e000"/>
<rect x="569" y="565" width="1" height="6" fill="#00e000"/>
<rect x="572" y="565" width="1" height="6" fill="#00e000"/>
<rect x="575" y="565" width="1" height="6" fill="#00e000"/>
<rect x="579" y="565" width="1" height="6" fill="#00e000"/>
<rect x="582" y="565" width="1" height="4" fill="#00e000"/>
<rect x="585" y="565" width="1" height="3" fill="#00e000"/>
<rect x="589" y="565" width="1" height="2" fill="#00e000"/>
<rect x="592" y="565" width="1" height="1" fill="#00e000"/>
<rect x="595" y="564" width="1" height="2" fill="#00e000"/>
<rect x="599" y="564" width="1" height="2" fill="#00e000"/>
<rect x="602" y="564" width="1" height="2" fill="#00e000"/>
<rect x="605" y="564" width="1" height="2" fill="#00e000"/>
<rect x="609" y="564" width="1" height="2" fill="#00e000"/>
<rect x="612" y="565" width="1" height="1" fill="#00e000"/>
<rect x="615" y="565" width="1" height="1" fill="#00e000"/>
<rect x="619" y="565" width="1" height="3" fill="#00e000"/>
<rect x="622" y="565" width="1" height="4" fill="#00e000"/>
<rect x="625" y="565" width="1" height="4" fill="#00e000"/>
<rect x="629" y="565" width="1" height="6" fill="#00e000"/>
<rect x="632" y="565" width="1" height="8" fill="#00e000"/>
<rect x="636" y="565" width="1" height="8" fill="#00e000"/>
<rect x="639" y="565" width="1" height="6" fill="#00e000"/>
<rect x="642" y="565" width="1" height="4" fill="#00e000"/>
<rect x="646" y="565" width="1" height="4" fill="#00e000"/>
<rect x="649" y="565" width="1" height="4" fill="#00e000"/>
<rect x="652" y="565" width="1" height="4" fill="#00e000"/>
<rect x="656" y="565" width="1" height="3" fill="#00e000"/>
<rect x="659" y="565" width="1" height="1" fill="#00e000"/>
<rect x="662" y="565" width="1" height="1" fill="#00e000"/>
<rect x="666" y="565" width="1" height="1" fill="#00e000"/>
<rect x="669" y="564" width="1" height="2" fill="#00e000"/>
<rect x="672" y="565" width="1" height="1" fill="#00e000"/>
<rect x="676" y="565" width="1" height="1" fill="#00e000"/>
<rect x="679" y="565" width="1" height="1" fill="#00e000"/>
<rect x="682" y="565" width="1" height="2" fill="#00e000"/>
<rect x="686" y="565" width="1" height="2" fill="#00e000"/>
<rect x="689" y="564" width="1" height="2" fill="#00e000"/>
<rect x="692" y="562" width="1" height="4" fill="#00e000"/>
<rect x="696" y="561" width="1" height="5" fill="#00e000"/>
<rect x="699" y="560" width="1" height="6" fill="#00e000"/>
<rect x="702" y="560" width="1" height="6" fill="#00e000"/>
<rect x="706" y="560" width="1" height="6" fill="#00e000"/>
<rect x="709" y="559" width="1" height="7" fill="#00e000"/>
<rect x="712" y="557" width="1" height="9" fill="#00e000"/>
<rect x="716" y="554" width="1" height="12" fill="#00e000"/>
<rect x="719" y="554" width="1" height="12" fill="#00e000"/>
</g>
<g shape-rendering="crispEdges" fill="#000">
<rect x="52" y="584" width="1" height="4"/>
<rect x="82" y="584" width="1" height="4"/>
<rect x="112" y="584" width="1" height="4"/>
<rect x="145" y="584" width="1" height="4"/>
<rect x="175" y="584" width="1" height="4"/>
<rect x="209" y="584" width="1" height="4"/>
<rect x="239" y="584" width="1" height="4"/>
<rect x="269" y="584" width="1" height="4"/>
<rect x="299" y="584" width="1" height="4"/>
<rect x="329" y="584" width="1" height="4"/>
<rect x="359" y="584" width="1" height="4"/>
<rect x="389" y="584" width="1" height="4"/>
<rect x="419" y="584" width="1" height="4"/>
<rect x="449" y="584" width="1" height="4"/>
<rect x="479" y="584" width="1" height="4"/>
<rect x="509" y="584" width="1" height="4"/>
<rect x="539" y="584" width="1" height="4"/>
<rect x="569" y="584" width="1" height="4"/>
<rect x="600" y="584" width="1" height="4"/>
<rect x="630" y="584" width="1" height="4"/>
<rect x="660" y="584" width="1" height="4"/>
<rect x="690" y="584" width="1" height="4"/>
<rect x="720" y="584" width="1" height="4"/>
</g>
<text transform="translate(55,597) scale(0.825,1)" xml:space="preserve">24</text>
<text transform="translate(85,597) scale(0.825,1)" xml:space="preserve">27</text>
<text transform="translate(115,597) scale(0.825,1)" xml:space="preserve">28</text>
<text transform="translate(148,597) scale(0.825,1)" xml:space="preserve">29</text>
<text transform="translate(178,597) scale(0.825,1)" xml:space="preserve">30</text>
<text transform="translate(212,597) scale(0.825,1)" xml:space="preserve">31</text>
<text transform="translate(242,597) scale(0.825,1)" xml:space="preserve">Nov</text>
<text transform="translate(272,597) scale(0.825,1)" xml:space="preserve">4</text>
<text transform="translate(302,597) scale(0.825,1)" xml:space="preserve">5</text>
<text transform="translate(332,597) scale(0.825,1)" xml:space="preserve">6</text>
<text transform="translate(362,597) scale(0.825,1)" xml:space="preserve">7</text>
<text transform="translate(392,597) scale(0.825,1)" xml:space="preserve">10</text>
<text transform="translate(422,597) scale(0.825,1)" xml:space="preserve">11</text>
<text transform="translate(452,597) scale(0.825,1)" xml:space="preserve">12</text>
<text transform="translate(482,597) scale(0.825,1)" xml:space="preserve">13</text>
<text transform="translate(512,597) scale(0.825,1)" xml:space="preserve">14</text>
<text transform="translate(542,597) scale(0.825,1)" xml:space="preserve">17</text>
<text transform="translate(572,597) scale(0.825,1)" xml:space="preserve">18</text>
<text transform="translate(603,597) scale(0.825,1)" xml:space="preserve">19</text>
<text transform="translate(633,597) scale(0.825,1)" xml:space="preserve">20</text>
<text transform="translate(663,597) scale(0.825,1)" xml:space="preserve">21</text>
<text transform="translate(693,597) scale(0.825,1)" xml:space="preserve">24</text>
<text transform="translate(723,597) scale(0.825,1)" xml:space="preserve">25</text>
</svg></body></html>
